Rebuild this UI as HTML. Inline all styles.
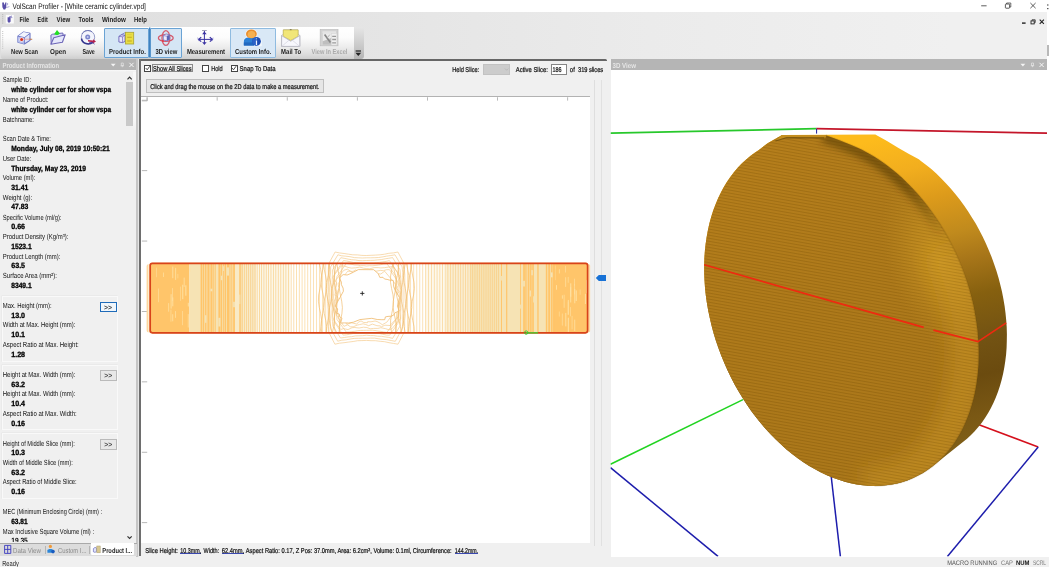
<!DOCTYPE html>
<html><head><meta charset="utf-8"><title>VolScan Profiler</title>
<style>
html,body{margin:0;padding:0;}
body{width:1049px;height:567px;overflow:hidden;position:relative;background:#f0f0f0;font-family:"Liberation Sans",sans-serif;font-size:7.5px;text-rendering:geometricPrecision;}
.t{position:absolute;white-space:nowrap;line-height:10px;height:10px;transform-origin:0 50%;display:block;}
.a{position:absolute;}
.gb{border:1px solid #f9f9f9;box-sizing:border-box;background:#f0f0f0;box-shadow:-0.5px -0.5px 0 #e4e4e4;}
.cb{width:7px;height:7px;background:#fff;border:0.8px solid #444;box-sizing:border-box;}

</style></head>
<body>
<!-- title bar -->
<div class="a" style="left:0;top:0;width:1049px;height:12.4px;background:#fff;"></div>
<!-- menu/toolbar background band -->
<div class="a" style="left:0;top:12.4px;width:1049px;height:47px;background:linear-gradient(90deg,#dedede 0,#e3e3e3 300px,#ebebeb 650px,#f0f0f0 950px,#f0f0f0 100%);"></div>
<!-- toolbar strip -->
<div class="a" id="tb" style="left:1px;top:26.5px;width:353px;height:32px;background:linear-gradient(180deg,#ffffff 0,#fcfcfc 33%,#eeeeee 60%,#dcdcdc 86%,#cecece 100%);border-radius:2px 0 0 2px;"></div>
<div class="a" style="left:354px;top:26.5px;width:9.5px;height:32px;background:linear-gradient(180deg,#e6e6e6 0,#c9c9c9 60%,#b5b5b5 100%);border-radius:0 3px 3px 0;"></div>
<!-- toolbar active buttons -->
<div class="a" style="left:103.5px;top:27.5px;width:45.5px;height:30px;background:#d5e6f5;border:1px solid #6aa3d4;box-sizing:border-box;border-radius:1px;"></div>
<div class="a" style="left:149.5px;top:27.5px;width:32.5px;height:30px;background:#d5e6f5;border:1px solid #6aa3d4;box-sizing:border-box;border-radius:1px;"></div>
<div class="a" style="left:229.7px;top:27.5px;width:46.3px;height:30px;background:#d9e8f6;border:1px solid #8fbbe0;box-sizing:border-box;border-radius:1px;"></div>

<!-- left panel -->
<div class="a" style="left:0;top:59.2px;width:136.0px;height:11.2px;background:#b4b4b4;"></div>
<div class="a" style="left:0;top:70.4px;width:136.4px;height:472.6px;background:#f0f0f0;"></div><div class="a" style="left:136.0px;top:59.2px;width:1.6px;height:497.4px;background:#c6c6c6;"></div><div class="a" style="left:137.6px;top:59.2px;width:1.8px;height:497.4px;background:#e5e5e5;"></div><div class="a" style="left:133.3px;top:70.4px;width:2.7px;height:60px;background:linear-gradient(180deg,#f8f8f8,#f8f8f8 80%,#f0f0f0);"></div>
<div class="a" style="left:0;top:70.4px;width:136px;height:1.8px;background:linear-gradient(180deg,#fafafa,#f0f0f0);"></div>
<!-- left scrollbar -->
<div class="a" style="left:125.9px;top:71px;width:7.4px;height:471px;background:#f0f0f0;"></div>
<div class="a" style="left:125.9px;top:82.4px;width:7.4px;height:44px;background:#c9c9c9;"></div>
<!-- group boxes -->
<div class="a gb" style="left:1.5px;top:295.8px;width:116.5px;height:66.5px;"></div>
<div class="a gb" style="left:1.5px;top:364.6px;width:116.5px;height:65px;"></div>
<div class="a gb" style="left:1.5px;top:432.6px;width:116.5px;height:66.5px;"></div>
<!-- >> buttons -->
<div class="a" style="left:100.1px;top:302.0px;width:17px;height:9.7px;background:#f0f6fb;border:1.3px solid #1f6bb9;box-sizing:border-box;"></div>
<div class="a" style="left:99.9px;top:370.1px;width:17.4px;height:10.6px;background:#e8e8e8;border:1px solid #bababa;box-sizing:border-box;"></div>
<div class="a" style="left:99.9px;top:439.1px;width:17.4px;height:10.5px;background:#e8e8e8;border:1px solid #bababa;box-sizing:border-box;"></div>
<!-- clipped last value -->
<svg class="a" style="left:0;top:534px;will-change:transform;opacity:0.999;" width="120" height="8.3" viewBox="0 534 120 8.3" font-family="'Liberation Sans', sans-serif"><text x="11.2" y="543.5" font-size="7.6" font-weight="700" fill="#000" textLength="16.6" lengthAdjust="spacingAndGlyphs">19.35</text></svg>
<!-- tabs -->
<div class="a" style="left:0;top:543px;width:137px;height:13px;background:#dcdcdc;"></div>
<div class="a" style="left:0;top:543px;width:137px;height:1px;background:#a9a9a9;"></div>
<div class="a" style="left:90.5px;top:543px;width:43.5px;height:12px;background:#fff;border-radius:0 0 1px 1px;"></div>
<div class="a" style="left:44.5px;top:546px;width:1px;height:8px;background:#b5b5b5;"></div>
<div class="a" style="left:88.5px;top:546px;width:1px;height:8px;background:#b5b5b5;"></div>
<!-- status bar -->
<div class="a" style="left:0;top:556.6px;width:1049px;height:10.4px;background:#f0f0f0;"></div>

<!-- center panel -->
<div class="a" style="left:139.5px;top:59.3px;width:468px;height:497.3px;background:#f0f0f0;"></div>
<div class="a" style="left:139.3px;top:59.3px;width:468.2px;height:1.7px;background:#666666;border-radius:0 1.5px 0 0;"></div>
<div class="a" style="left:139.3px;top:59.3px;width:1.7px;height:497px;background:#6e6e6e;"></div>
<!-- message box -->
<div class="a" style="left:145.6px;top:78.7px;width:178.2px;height:14.7px;background:#e6e6e6;border:1px solid #bfbfbf;box-sizing:border-box;"></div>
<!-- canvas -->
<div class="a" style="left:141px;top:96.2px;width:448.6px;height:447px;background:#fff;border-top:1px solid #b2b2b2;box-sizing:border-box;"></div>
<!-- checkboxes -->
<div class="a cb" style="left:144.2px;top:64.6px;"></div>
<div class="a cb" style="left:202.3px;top:64.6px;"></div>
<div class="a cb" style="left:230.5px;top:64.6px;"></div>
<!-- focus rect -->
<div class="a" style="left:151.6px;top:64.2px;width:41px;height:8px;border:0.7px solid #8a8a8a;box-sizing:border-box;"></div>
<!-- combos -->
<div class="a" style="left:482.8px;top:63.9px;width:27.5px;height:11.6px;background:#cccccc;border:1px solid #c2c2c2;box-sizing:border-box;"></div>
<div class="a" style="left:550.6px;top:64px;width:16.3px;height:10.6px;background:#fff;border:0.9px solid #858585;box-sizing:border-box;"></div>
<!-- slider track -->
<div class="a" style="left:593.6px;top:80px;width:1px;height:466px;background:#dedede;"></div>
<div class="a" style="left:600.6px;top:80px;width:1.6px;height:466px;background:#e1e1e1;"></div>

<!-- 3D panel -->
<div class="a" style="left:610.5px;top:59.2px;width:436.5px;height:10.4px;background:#b5b5b5;"></div>
<div class="a" style="left:610.5px;top:69.5px;width:436.5px;height:487px;background:#fff;"></div>
<div class="a" style="left:1047px;top:0;width:2px;height:557px;background:#fff;"></div>
<div class="a" style="left:1047px;top:45px;width:2px;height:10.5px;background:#b9b9b9;"></div>

<!-- underlines bottom line -->
<div class="a" style="left:180.3px;top:553.4px;width:20.9px;height:0.8px;background:#3a48b0;"></div>
<div class="a" style="left:221.8px;top:553.4px;width:22.3px;height:0.8px;background:#3a48b0;"></div>
<div class="a" style="left:454.8px;top:553.4px;width:23.4px;height:0.8px;background:#3a48b0;"></div>

<svg class="a" style="left:0;top:0;" width="1049" height="567" viewBox="0 0 1049 567">
<defs>
<clipPath id="v3"><rect x="610.5" y="69.5" width="436.5" height="487"/></clipPath>
<linearGradient id="gface" gradientUnits="userSpaceOnUse" x1="760" y1="140" x2="900" y2="480">
<stop offset="0" stop-color="#b27a17"/><stop offset="0.5" stop-color="#aa7516"/><stop offset="1" stop-color="#a67215"/></linearGradient>
<linearGradient id="grim" gradientUnits="userSpaceOnUse" x1="900" y1="134" x2="980" y2="486">
<stop offset="0" stop-color="#fdbb1c"/><stop offset="0.10" stop-color="#f2ae1e"/><stop offset="0.19" stop-color="#dd9b1b"/><stop offset="0.30" stop-color="#c08a1d"/><stop offset="0.376" stop-color="#a87619"/><stop offset="0.48" stop-color="#86600f"/><stop offset="0.6" stop-color="#735313"/><stop offset="0.7" stop-color="#6b4b0f"/><stop offset="0.81" stop-color="#7a5814"/><stop offset="0.9" stop-color="#806018"/><stop offset="1" stop-color="#7a5812"/></linearGradient>
<radialGradient id="gfr" gradientUnits="userSpaceOnUse" cx="940" cy="262" r="95" gradientTransform="translate(940 262) rotate(70) scale(1 0.55) translate(-940 -262)">
<stop offset="0" stop-color="#cf9820" stop-opacity="0.9"/><stop offset="0.45" stop-color="#c58f1e" stop-opacity="0.6"/><stop offset="1" stop-color="#b8841b" stop-opacity="0"/></radialGradient>
<linearGradient id="gsh" gradientUnits="userSpaceOnUse" x1="830" y1="135" x2="945" y2="235">
<stop offset="0" stop-color="#4a3205" stop-opacity="0.55"/><stop offset="0.6" stop-color="#4a3205" stop-opacity="0.6"/><stop offset="0.85" stop-color="#4a3205" stop-opacity="0.25"/><stop offset="1" stop-color="#4a3205" stop-opacity="0"/></linearGradient>
<pattern id="stri" width="40" height="3.0" patternUnits="userSpaceOnUse" patternTransform="rotate(10)">
<rect x="0" y="0" width="40" height="1.2" fill="#5a3c04" opacity="0.16"/><rect x="0" y="1.4" width="40" height="1.1" fill="#ffcf60" opacity="0.10"/></pattern>
<filter id="bl2" x="-30%" y="-30%" width="160%" height="160%"><feGaussianBlur stdDeviation="9"/></filter>
<filter id="bl" x="-20%" y="-20%" width="140%" height="140%"><feGaussianBlur stdDeviation="3.5"/></filter>
<clipPath id="cface"><path d="M782.1,135.1 L825.8,135.2 L840,140.4 L852.3,145.5 L855.9,147.1 L861.9,149.8 L867.8,152.9 L873.6,156.3 L879.4,160.0 L885.1,164.0 L890.7,168.3 L896.3,172.8 L901.7,177.6 L907.0,182.7 L912.2,188.0 L917.3,193.5 L922.2,199.2 L927.0,205.2 L931.6,211.4 L936.0,217.7 L940.3,224.3 L944.3,231.0 L948.2,237.8 L951.8,244.8 L955.3,251.9 L958.5,259.2 L961.5,266.5 L964.3,273.9 L966.9,281.4 L969.2,288.9 L971.2,296.5 L973.1,304.1 L974.6,311.8 L975.9,319.4 L977.0,327.0 L977.8,334.6 L978.3,342.1 L978.6,349.6 L978.6,357.0 L978.4,364.3 L977.9,371.5 L977.1,378.6 L976.1,385.6 L974.8,392.4 L973.3,399.1 L971.5,405.6 L969.5,411.9 L967.2,418.1 L964.7,424.0 L962.0,429.7 L959.0,435.2 L955.8,440.5 L952.4,445.5 L948.7,450.2 L944.9,454.7 L940.9,458.9 L936.6,462.9 L932.2,466.5 L927.7,469.8 L922.9,472.9 L918.0,475.6 L913.0,478.1 L907.8,480.2 L902.5,481.9 L897.1,483.4 L891.6,484.5 L885.9,485.3 L880.2,485.8 L874.5,486.0 L868.6,485.8 L862.7,485.2 L856.8,484.4 L850.8,483.2 L844.8,481.7 L838.8,479.8 L832.9,477.7 L826.9,475.2 L821.0,472.4 L815.1,469.3 L809.2,465.9 L803.4,462.2 L797.7,458.2 L792.1,454.0 L786.5,449.4 L781.1,444.6 L775.8,439.6 L770.6,434.3 L765.5,428.8 L760.6,423.0 L755.8,417.0 L751.2,410.9 L746.8,404.5 L742.6,398.0 L738.5,391.3 L734.6,384.4 L731.0,377.4 L727.5,370.3 L724.3,363.1 L721.3,355.7 L718.5,348.3 L715.9,340.8 L713.6,333.3 L711.6,325.7 L709.8,318.1 L708.2,310.5 L706.9,302.9 L705.8,295.2 L705.0,287.7 L704.5,280.1 L704.2,272.7 L704.2,265.2 L704.4,257.9 L704.9,250.7 L705.7,243.6 L706.7,236.7 L708.0,229.8 L709.5,223.1 L711.3,216.6 L713.3,210.3 L715.6,204.2 L718.1,198.2 L720.9,192.5 L723.8,187.0 L727.0,181.8 L730.5,176.8 L734.1,172.0 L737.9,167.5 L742.0,163.3 L746.2,159.4 L750.6,155.7 L755.1,152.4 L758.9,149.9 L767.6,143.3 Z"/></clipPath>
<radialGradient id="gshade" gradientUnits="userSpaceOnUse" cx="940" cy="250" r="70" gradientTransform="translate(940 250) rotate(60) scale(1 0.35) translate(-940 -250)">
<stop offset="0" stop-color="#5a3e08" stop-opacity="0.35"/><stop offset="1" stop-color="#5a3e08" stop-opacity="0"/></radialGradient>
</defs>
<g clip-path="url(#v3)">
<line x1="610.5" y1="133.2" x2="816.4" y2="128.7" stroke="#27c82b" stroke-width="1.8"/>
<line x1="816.4" y1="128.7" x2="1047" y2="133.2" stroke="#c4162a" stroke-width="1.8"/>
<line x1="816.6" y1="128.7" x2="816.6" y2="133.6" stroke="#1c1c9c" stroke-width="1"/>
<line x1="610.5" y1="464.2" x2="743" y2="399.6" stroke="#22d422" stroke-width="1.6"/>
<line x1="610.5" y1="467.6" x2="718" y2="556.4" stroke="#1d1dac" stroke-width="1.5"/>
<line x1="831.2" y1="476.5" x2="840.4" y2="556.5" stroke="#1d1dac" stroke-width="1.5"/>
<line x1="977" y1="424" x2="1038.2" y2="447.1" stroke="#d5101c" stroke-width="1.6"/>
<line x1="1038.2" y1="447.1" x2="947.4" y2="556.5" stroke="#1d1dac" stroke-width="1.5"/>
<path d="M782.1,135.1 L875.3,134.5 L887,141 L898.5,148.1 L909,154 L918.8,159.3 L920.9,160.9 L926.2,164.9 L931.3,169.1 L936.3,173.6 L941.3,178.4 L946.1,183.4 L950.7,188.5 L955.3,193.9 L959.7,199.5 L963.9,205.3 L968.0,211.2 L971.9,217.4 L975.7,223.6 L979.2,230.0 L982.6,236.5 L985.8,243.2 L988.7,249.9 L991.5,256.8 L994.0,263.7 L996.4,270.7 L998.5,277.7 L1000.3,284.7 L1002.0,291.8 L1003.4,298.9 L1004.6,306.0 L1005.5,313.1 L1006.2,320.1 L1006.7,327.1 L1006.9,334.1 L1006.8,340.9 L1006.6,347.7 L1006.1,354.4 L1005.3,361.0 L1004.3,367.4 L1003.1,373.8 L1001.6,379.9 L999.9,386.0 L998.0,391.8 L995.8,397.5 L993.4,402.9 L990.8,408.2 L988.0,413.3 L985.0,418.1 L981.8,422.7 L978.3,427.1 L974.7,431.2 L971.0,435.1 L967.0,438.7 L932.2,466.5 L927.7,469.8 L922.9,472.9 L918.0,475.6 L913.0,478.1 L907.8,480.2 L902.5,481.9 L897.1,483.4 L891.6,484.5 L885.9,485.3 L880.2,485.8 L874.5,486.0 L868.6,485.8 L862.7,485.2 L856.8,484.4 L850.8,483.2 L844.8,481.7 L838.8,479.8 L832.9,477.7 L826.9,475.2 L821.0,472.4 L815.1,469.3 L809.2,465.9 L803.4,462.2 L797.7,458.2 L792.1,454.0 L786.5,449.4 L781.1,444.6 L775.8,439.6 L770.6,434.3 L765.5,428.8 L760.6,423.0 L755.8,417.0 L751.2,410.9 L746.8,404.5 L742.6,398.0 L738.5,391.3 L734.6,384.4 L731.0,377.4 L727.5,370.3 L724.3,363.1 L721.3,355.7 L718.5,348.3 L715.9,340.8 L713.6,333.3 L711.6,325.7 L709.8,318.1 L708.2,310.5 L706.9,302.9 L705.8,295.2 L705.0,287.7 L704.5,280.1 L704.2,272.7 L704.2,265.2 L704.4,257.9 L704.9,250.7 L705.7,243.6 L706.7,236.7 L708.0,229.8 L709.5,223.1 L711.3,216.6 L713.3,210.3 L715.6,204.2 L718.1,198.2 L720.9,192.5 L723.8,187.0 L727.0,181.8 L730.5,176.8 L734.1,172.0 L737.9,167.5 L742.0,163.3 L746.2,159.4 L750.6,155.7 L755.1,152.4 L758.9,149.9 L767.6,143.3 Z" fill="url(#grim)"/>
<path d="M782.1,135.1 L825.8,135.2 L840,140.4 L852.3,145.5 L855.9,147.1 L861.9,149.8 L867.8,152.9 L873.6,156.3 L879.4,160.0 L885.1,164.0 L890.7,168.3 L896.3,172.8 L901.7,177.6 L907.0,182.7 L912.2,188.0 L917.3,193.5 L922.2,199.2 L927.0,205.2 L931.6,211.4 L936.0,217.7 L940.3,224.3 L944.3,231.0 L948.2,237.8 L951.8,244.8 L955.3,251.9 L958.5,259.2 L961.5,266.5 L964.3,273.9 L966.9,281.4 L969.2,288.9 L971.2,296.5 L973.1,304.1 L974.6,311.8 L975.9,319.4 L977.0,327.0 L977.8,334.6 L978.3,342.1 L978.6,349.6 L978.6,357.0 L978.4,364.3 L977.9,371.5 L977.1,378.6 L976.1,385.6 L974.8,392.4 L973.3,399.1 L971.5,405.6 L969.5,411.9 L967.2,418.1 L964.7,424.0 L962.0,429.7 L959.0,435.2 L955.8,440.5 L952.4,445.5 L948.7,450.2 L944.9,454.7 L940.9,458.9 L936.6,462.9 L932.2,466.5 L927.7,469.8 L922.9,472.9 L918.0,475.6 L913.0,478.1 L907.8,480.2 L902.5,481.9 L897.1,483.4 L891.6,484.5 L885.9,485.3 L880.2,485.8 L874.5,486.0 L868.6,485.8 L862.7,485.2 L856.8,484.4 L850.8,483.2 L844.8,481.7 L838.8,479.8 L832.9,477.7 L826.9,475.2 L821.0,472.4 L815.1,469.3 L809.2,465.9 L803.4,462.2 L797.7,458.2 L792.1,454.0 L786.5,449.4 L781.1,444.6 L775.8,439.6 L770.6,434.3 L765.5,428.8 L760.6,423.0 L755.8,417.0 L751.2,410.9 L746.8,404.5 L742.6,398.0 L738.5,391.3 L734.6,384.4 L731.0,377.4 L727.5,370.3 L724.3,363.1 L721.3,355.7 L718.5,348.3 L715.9,340.8 L713.6,333.3 L711.6,325.7 L709.8,318.1 L708.2,310.5 L706.9,302.9 L705.8,295.2 L705.0,287.7 L704.5,280.1 L704.2,272.7 L704.2,265.2 L704.4,257.9 L704.9,250.7 L705.7,243.6 L706.7,236.7 L708.0,229.8 L709.5,223.1 L711.3,216.6 L713.3,210.3 L715.6,204.2 L718.1,198.2 L720.9,192.5 L723.8,187.0 L727.0,181.8 L730.5,176.8 L734.1,172.0 L737.9,167.5 L742.0,163.3 L746.2,159.4 L750.6,155.7 L755.1,152.4 L758.9,149.9 L767.6,143.3 Z" fill="url(#gface)"/>
<path d="M782.1,135.1 L825.8,135.2 L840,140.4 L852.3,145.5 L855.9,147.1 L861.9,149.8 L867.8,152.9 L873.6,156.3 L879.4,160.0 L885.1,164.0 L890.7,168.3 L896.3,172.8 L901.7,177.6 L907.0,182.7 L912.2,188.0 L917.3,193.5 L922.2,199.2 L927.0,205.2 L931.6,211.4 L936.0,217.7 L940.3,224.3 L944.3,231.0 L948.2,237.8 L951.8,244.8 L955.3,251.9 L958.5,259.2 L961.5,266.5 L964.3,273.9 L966.9,281.4 L969.2,288.9 L971.2,296.5 L973.1,304.1 L974.6,311.8 L975.9,319.4 L977.0,327.0 L977.8,334.6 L978.3,342.1 L978.6,349.6 L978.6,357.0 L978.4,364.3 L977.9,371.5 L977.1,378.6 L976.1,385.6 L974.8,392.4 L973.3,399.1 L971.5,405.6 L969.5,411.9 L967.2,418.1 L964.7,424.0 L962.0,429.7 L959.0,435.2 L955.8,440.5 L952.4,445.5 L948.7,450.2 L944.9,454.7 L940.9,458.9 L936.6,462.9 L932.2,466.5 L927.7,469.8 L922.9,472.9 L918.0,475.6 L913.0,478.1 L907.8,480.2 L902.5,481.9 L897.1,483.4 L891.6,484.5 L885.9,485.3 L880.2,485.8 L874.5,486.0 L868.6,485.8 L862.7,485.2 L856.8,484.4 L850.8,483.2 L844.8,481.7 L838.8,479.8 L832.9,477.7 L826.9,475.2 L821.0,472.4 L815.1,469.3 L809.2,465.9 L803.4,462.2 L797.7,458.2 L792.1,454.0 L786.5,449.4 L781.1,444.6 L775.8,439.6 L770.6,434.3 L765.5,428.8 L760.6,423.0 L755.8,417.0 L751.2,410.9 L746.8,404.5 L742.6,398.0 L738.5,391.3 L734.6,384.4 L731.0,377.4 L727.5,370.3 L724.3,363.1 L721.3,355.7 L718.5,348.3 L715.9,340.8 L713.6,333.3 L711.6,325.7 L709.8,318.1 L708.2,310.5 L706.9,302.9 L705.8,295.2 L705.0,287.7 L704.5,280.1 L704.2,272.7 L704.2,265.2 L704.4,257.9 L704.9,250.7 L705.7,243.6 L706.7,236.7 L708.0,229.8 L709.5,223.1 L711.3,216.6 L713.3,210.3 L715.6,204.2 L718.1,198.2 L720.9,192.5 L723.8,187.0 L727.0,181.8 L730.5,176.8 L734.1,172.0 L737.9,167.5 L742.0,163.3 L746.2,159.4 L750.6,155.7 L755.1,152.4 L758.9,149.9 L767.6,143.3 Z" fill="url(#gfr)"/>
<g clip-path="url(#cface)"><path d="M955.3,251.9 L958.5,259.2 L961.5,266.5 L964.3,273.9 L966.9,281.4 L969.2,288.9 L971.2,296.5 L973.1,304.1 L974.6,311.8 L975.9,319.4 L977.0,327.0 L977.8,334.6 L978.3,342.1 L978.6,349.6 L978.6,357.0 L978.4,364.3 L977.9,371.5 L977.1,378.6 L976.1,385.6 L974.8,392.4 L973.3,399.1 L971.5,405.6 L969.5,411.9 L967.2,418.1 L964.7,424.0 L962.0,429.7 L959.0,435.2 L955.8,440.5 L952.4,445.5 L948.7,450.2 L944.9,454.7 L940.9,458.9 L936.6,462.9 L932.2,466.5 L927.7,469.8 L922.9,472.9 L918.0,475.6 L913.0,478.1 L907.8,480.2 L902.5,481.9 L897.1,483.4 L891.6,484.5 L885.9,485.3 L880.2,485.8 L874.5,486.0" fill="none" stroke="#cc961f" stroke-opacity="0.5" stroke-width="34" filter="url(#bl2)" transform="translate(-12,-2)"/></g>
<path d="M782.1,135.1 L825.8,135.2 L840,140.4 L852.3,145.5 L855.9,147.1 L861.9,149.8 L867.8,152.9 L873.6,156.3 L879.4,160.0 L885.1,164.0 L890.7,168.3 L896.3,172.8 L901.7,177.6 L907.0,182.7 L912.2,188.0 L917.3,193.5 L922.2,199.2 L927.0,205.2 L931.6,211.4 L936.0,217.7 L940.3,224.3 L944.3,231.0 L948.2,237.8 L951.8,244.8 L955.3,251.9 L958.5,259.2 L961.5,266.5 L964.3,273.9 L966.9,281.4 L969.2,288.9 L971.2,296.5 L973.1,304.1 L974.6,311.8 L975.9,319.4 L977.0,327.0 L977.8,334.6 L978.3,342.1 L978.6,349.6 L978.6,357.0 L978.4,364.3 L977.9,371.5 L977.1,378.6 L976.1,385.6 L974.8,392.4 L973.3,399.1 L971.5,405.6 L969.5,411.9 L967.2,418.1 L964.7,424.0 L962.0,429.7 L959.0,435.2 L955.8,440.5 L952.4,445.5 L948.7,450.2 L944.9,454.7 L940.9,458.9 L936.6,462.9 L932.2,466.5 L927.7,469.8 L922.9,472.9 L918.0,475.6 L913.0,478.1 L907.8,480.2 L902.5,481.9 L897.1,483.4 L891.6,484.5 L885.9,485.3 L880.2,485.8 L874.5,486.0 L868.6,485.8 L862.7,485.2 L856.8,484.4 L850.8,483.2 L844.8,481.7 L838.8,479.8 L832.9,477.7 L826.9,475.2 L821.0,472.4 L815.1,469.3 L809.2,465.9 L803.4,462.2 L797.7,458.2 L792.1,454.0 L786.5,449.4 L781.1,444.6 L775.8,439.6 L770.6,434.3 L765.5,428.8 L760.6,423.0 L755.8,417.0 L751.2,410.9 L746.8,404.5 L742.6,398.0 L738.5,391.3 L734.6,384.4 L731.0,377.4 L727.5,370.3 L724.3,363.1 L721.3,355.7 L718.5,348.3 L715.9,340.8 L713.6,333.3 L711.6,325.7 L709.8,318.1 L708.2,310.5 L706.9,302.9 L705.8,295.2 L705.0,287.7 L704.5,280.1 L704.2,272.7 L704.2,265.2 L704.4,257.9 L704.9,250.7 L705.7,243.6 L706.7,236.7 L708.0,229.8 L709.5,223.1 L711.3,216.6 L713.3,210.3 L715.6,204.2 L718.1,198.2 L720.9,192.5 L723.8,187.0 L727.0,181.8 L730.5,176.8 L734.1,172.0 L737.9,167.5 L742.0,163.3 L746.2,159.4 L750.6,155.7 L755.1,152.4 L758.9,149.9 L767.6,143.3 Z" fill="url(#stri)"/>
<g clip-path="url(#cface)"><path d="M825.8,135.2 L840,140.4 L852.3,145.5 L855.9,147.1 L861.9,149.8 L867.8,152.9 L873.6,156.3 L879.4,160.0 L885.1,164.0 L890.7,168.3 L896.3,172.8 L901.7,177.6 L907.0,182.7 L912.2,188.0 L917.3,193.5 L922.2,199.2 L927.0,205.2 L931.6,211.4 L936.0,217.7 L940.3,224.3 L944.3,231.0 L948.2,237.8 L951.8,244.8 L955.3,251.9 L958.5,259.2 L961.5,266.5 L964.3,273.9 L966.9,281.4 L969.2,288.9 L971.2,296.5 L973.1,304.1 L974.6,311.8 L975.9,319.4 L977.0,327.0 L977.8,334.6 L978.3,342.1 L978.6,349.6 L978.6,357.0 L978.4,364.3 L977.9,371.5 L977.1,378.6 L976.1,385.6 L974.8,392.4 L973.3,399.1 L971.5,405.6 L969.5,411.9 L967.2,418.1 L964.7,424.0 L962.0,429.7 L959.0,435.2 L955.8,440.5 L952.4,445.5 L948.7,450.2 L944.9,454.7 L940.9,458.9 L936.6,462.9 L932.2,466.5 L927.7,469.8 L922.9,472.9 L918.0,475.6 L913.0,478.1 L907.8,480.2 L902.5,481.9 L897.1,483.4 L891.6,484.5 L885.9,485.3 L880.2,485.8 L874.5,486.0" fill="none" stroke="url(#gsh)" stroke-width="10" filter="url(#bl)" transform="translate(-3,2)"/></g>
<path d="M782.1,135.1 L826,135.0 L826,137.6 L786.7,137.3 L776,140.6 Z" fill="#c48e1f"/>
<path d="M775.5,141 L786.7,137.6 L824,137.8" fill="none" stroke="#5e4208" stroke-opacity="0.6" stroke-width="1.2"/>
<path d="M825.8,135.2 L840,140.4 L852.3,145.5 L855.9,147.1 L861.9,149.8 L867.8,152.9 L873.6,156.3 L879.4,160.0 L885.1,164.0 L890.7,168.3 L896.3,172.8 L901.7,177.6 L907.0,182.7 L912.2,188.0 L917.3,193.5 L922.2,199.2 L927.0,205.2 L931.6,211.4 L936.0,217.7 L940.3,224.3 L944.3,231.0 L948.2,237.8 L951.8,244.8 L955.3,251.9 L958.5,259.2 L961.5,266.5 L964.3,273.9 L966.9,281.4 L969.2,288.9 L971.2,296.5 L973.1,304.1 L974.6,311.8 L975.9,319.4 L977.0,327.0 L977.8,334.6 L978.3,342.1 L978.6,349.6 L978.6,357.0 L978.4,364.3 L977.9,371.5 L977.1,378.6 L976.1,385.6 L974.8,392.4 L973.3,399.1 L971.5,405.6 L969.5,411.9 L967.2,418.1 L964.7,424.0 L962.0,429.7 L959.0,435.2 L955.8,440.5 L952.4,445.5 L948.7,450.2 L944.9,454.7 L940.9,458.9 L936.6,462.9 L932.2,466.5 L927.7,469.8 L922.9,472.9 L918.0,475.6 L913.0,478.1 L907.8,480.2 L902.5,481.9 L897.1,483.4 L891.6,484.5 L885.9,485.3 L880.2,485.8 L874.5,486.0" fill="none" stroke="#6e4f0c" stroke-opacity="0.18" stroke-width="1.6"/>
<path d="M704.2,264.8 L923.7,327.4 M933.4,330.1 L978,341.6 L1006.2,322.9" fill="none" stroke="#ee2a10" stroke-width="1.7"/>
</g></svg>
<svg class="a" style="left:0;top:0;" width="1049" height="567" viewBox="0 0 1049 567">
<defs><clipPath id="c2"><rect x="150.2" y="263.3" width="437.40000000000003" height="69.5" rx="2"/></clipPath><clipPath id="cv"><rect x="141.6" y="97.2" width="448.8" height="446"/></clipPath></defs>
<g clip-path="url(#cv)">
<rect x="146.6" y="97" width="0.9" height="3.6" fill="#b0b0b0"/>
<rect x="216.7" y="97" width="0.9" height="3.6" fill="#b0b0b0"/>
<rect x="286.8" y="97" width="0.9" height="3.6" fill="#b0b0b0"/>
<rect x="356.9" y="97" width="0.9" height="3.6" fill="#b0b0b0"/>
<rect x="427.0" y="97" width="0.9" height="3.6" fill="#b0b0b0"/>
<rect x="497.1" y="97" width="0.9" height="3.6" fill="#b0b0b0"/>
<rect x="567.2" y="97" width="0.9" height="3.6" fill="#b0b0b0"/>
<rect x="141.6" y="99.8" width="5.6" height="0.9" fill="#b0b0b0"/>
<rect x="141.6" y="170.2" width="5.6" height="0.9" fill="#b0b0b0"/>
<rect x="141.6" y="240.6" width="5.6" height="0.9" fill="#b0b0b0"/>
<rect x="141.6" y="311.0" width="5.6" height="0.9" fill="#b0b0b0"/>
<rect x="141.6" y="381.4" width="5.6" height="0.9" fill="#b0b0b0"/>
<rect x="141.6" y="451.8" width="5.6" height="0.9" fill="#b0b0b0"/>
<rect x="141.6" y="522.2" width="5.6" height="0.9" fill="#b0b0b0"/>
<path d="M141.6,100.9 H147.2 V97.2" fill="none" stroke="#b0b0b0" stroke-width="0.8"/>
<rect x="146.6" y="263.90000000000003" width="443.8" height="68.5" rx="2.5" fill="#fdd9a0"/><rect x="148.29999999999998" y="262.90000000000003" width="0.7" height="70.3" fill="#fff" opacity="0.7"/><rect x="149.39999999999998" y="262.40000000000003" width="439.00000000000006" height="71.3" rx="2.5" fill="#fde3ba"/>
<g clip-path="url(#c2)">
<rect x="150.2" y="263.3" width="437.40000000000003" height="69.5" fill="#fff"/>
<rect x="150.00" y="263.3" width="39.50" height="69.5" fill="#ffc56a" opacity="1"/>
<rect x="189.50" y="263.3" width="10.70" height="69.5" fill="#f6e3b4" opacity="1"/>
<rect x="200.20" y="263.3" width="31.80" height="69.5" fill="#f6e3b4" opacity="1"/>
<rect x="232.00" y="263.3" width="24.00" height="69.5" fill="#f6e3b4" opacity="0.75"/>
<rect x="256.00" y="263.3" width="34.00" height="69.5" fill="#f6e3b4" opacity="0.3"/>
<rect x="553.00" y="263.3" width="35.00" height="69.5" fill="#ffc56a" opacity="1"/>
<rect x="470.00" y="263.3" width="83.00" height="69.5" fill="#f6e3b4" opacity="1"/>
<rect x="446.00" y="263.3" width="24.00" height="69.5" fill="#f6e3b4" opacity="0.6"/>
<rect x="425.00" y="263.3" width="21.00" height="69.5" fill="#f6e3b4" opacity="0.25"/>
<rect x="156.1" y="267.6" width="0.6" height="9.6" fill="#ffe3a6" opacity="0.85"/>
<rect x="158.1" y="288.5" width="0.7" height="13.7" fill="#ffe3a6" opacity="0.85"/>
<rect x="163.2" y="272.5" width="0.8" height="4.5" fill="#ffe3a6" opacity="0.85"/>
<rect x="168.3" y="303.1" width="0.8" height="8.6" fill="#ffe3a6" opacity="0.85"/>
<rect x="170.6" y="309.6" width="0.7" height="12.1" fill="#ffe3a6" opacity="0.85"/>
<rect x="170.6" y="294.2" width="1.0" height="14.4" fill="#ffe3a6" opacity="0.85"/>
<rect x="172.3" y="288.1" width="0.7" height="12.8" fill="#ffe3a6" opacity="0.85"/>
<rect x="172.3" y="266.5" width="1.0" height="11.7" fill="#ffe3a6" opacity="0.85"/>
<rect x="172.3" y="314.2" width="0.9" height="7.1" fill="#ffe3a6" opacity="0.85"/>
<rect x="172.3" y="297.4" width="1.0" height="8.9" fill="#ffe3a6" opacity="0.85"/>
<rect x="175.2" y="267.8" width="0.9" height="12.1" fill="#ffe3a6" opacity="0.85"/>
<rect x="175.2" y="311.1" width="0.8" height="6.7" fill="#ffe3a6" opacity="0.85"/>
<rect x="177.6" y="273.9" width="0.6" height="4.5" fill="#ffe3a6" opacity="0.85"/>
<rect x="180.2" y="286.6" width="0.6" height="14.3" fill="#ffe3a6" opacity="0.85"/>
<rect x="182.2" y="311.0" width="0.7" height="14.2" fill="#ffe3a6" opacity="0.85"/>
<rect x="182.2" y="284.7" width="1.1" height="14.5" fill="#ffe3a6" opacity="0.85"/>
<rect x="183.7" y="277.6" width="0.9" height="9.3" fill="#ffe3a6" opacity="0.85"/>
<rect x="185.3" y="285.3" width="1.1" height="10.4" fill="#ffe3a6" opacity="0.85"/>
<rect x="187.8" y="302.8" width="1.0" height="3.7" fill="#ffe3a6" opacity="0.85"/>
<rect x="187.8" y="314.1" width="0.8" height="13.4" fill="#ffe3a6" opacity="0.85"/>
<rect x="189.7" y="267.8" width="0.7" height="3.9" fill="#ffe3a6" opacity="0.85"/>
<rect x="554.5" y="264.3" width="0.7" height="5.0" fill="#ffe3a6" opacity="0.85"/>
<rect x="554.5" y="265.8" width="0.9" height="14.4" fill="#ffe3a6" opacity="0.85"/>
<rect x="556.0" y="285.1" width="1.0" height="4.6" fill="#ffe3a6" opacity="0.85"/>
<rect x="558.9" y="269.2" width="0.8" height="4.3" fill="#ffe3a6" opacity="0.85"/>
<rect x="558.9" y="311.5" width="0.6" height="5.1" fill="#ffe3a6" opacity="0.85"/>
<rect x="561.9" y="295.3" width="0.9" height="3.4" fill="#ffe3a6" opacity="0.85"/>
<rect x="561.9" y="313.5" width="0.7" height="12.1" fill="#ffe3a6" opacity="0.85"/>
<rect x="563.7" y="294.7" width="0.8" height="13.1" fill="#ffe3a6" opacity="0.85"/>
<rect x="565.3" y="312.9" width="1.0" height="13.5" fill="#ffe3a6" opacity="0.85"/>
<rect x="565.3" y="277.2" width="0.8" height="9.7" fill="#ffe3a6" opacity="0.85"/>
<rect x="565.3" y="265.9" width="0.7" height="6.6" fill="#ffe3a6" opacity="0.85"/>
<rect x="567.8" y="317.7" width="1.1" height="15.8" fill="#ffe3a6" opacity="0.85"/>
<rect x="567.8" y="276.9" width="0.7" height="5.9" fill="#ffe3a6" opacity="0.85"/>
<rect x="567.8" y="299.9" width="1.0" height="14.7" fill="#ffe3a6" opacity="0.85"/>
<rect x="567.8" y="301.5" width="0.6" height="13.4" fill="#ffe3a6" opacity="0.85"/>
<rect x="570.2" y="307.1" width="0.7" height="9.2" fill="#ffe3a6" opacity="0.85"/>
<rect x="570.2" y="283.3" width="1.1" height="13.4" fill="#ffe3a6" opacity="0.85"/>
<rect x="570.2" y="287.2" width="1.0" height="15.3" fill="#ffe3a6" opacity="0.85"/>
<rect x="571.7" y="315.9" width="0.7" height="13.5" fill="#ffe3a6" opacity="0.85"/>
<rect x="574.3" y="284.3" width="0.7" height="10.1" fill="#ffe3a6" opacity="0.85"/>
<rect x="574.3" y="319.6" width="0.9" height="11.4" fill="#ffe3a6" opacity="0.85"/>
<rect x="574.3" y="289.0" width="1.0" height="14.3" fill="#ffe3a6" opacity="0.85"/>
<rect x="574.3" y="278.7" width="0.7" height="6.8" fill="#ffe3a6" opacity="0.85"/>
<rect x="575.7" y="290.4" width="1.1" height="10.6" fill="#ffe3a6" opacity="0.85"/>
<rect x="579.8" y="289.4" width="0.6" height="5.4" fill="#ffe3a6" opacity="0.85"/>
<rect x="584.9" y="293.8" width="1.0" height="10.2" fill="#ffe3a6" opacity="0.85"/>
<rect x="586.3" y="280.1" width="0.9" height="13.0" fill="#ffe3a6" opacity="0.85"/>
<rect x="200.50" y="263.3" width="1.59" height="69.5" fill="#ffc56a"/>
<rect x="202.64" y="263.3" width="1.66" height="69.5" fill="#ffc56a"/>
<rect x="205.05" y="263.3" width="1.43" height="69.5" fill="#ffc56a"/>
<rect x="205.05" y="315.2" width="1.43" height="7.6" fill="#f6e3b4"/>
<rect x="207.39" y="263.3" width="2.12" height="69.5" fill="#ffc56a"/>
<rect x="210.46" y="263.3" width="1.98" height="69.5" fill="#ffc56a"/>
<rect x="210.46" y="288.7" width="1.98" height="2.6" fill="#f6e3b4"/>
<rect x="212.83" y="263.3" width="0.90" height="69.5" fill="#ffc56a"/>
<rect x="214.65" y="263.3" width="1.02" height="69.5" fill="#ffc56a"/>
<rect x="218.39" y="263.3" width="2.13" height="69.5" fill="#ffc56a"/>
<rect x="218.39" y="317.8" width="2.13" height="8.7" fill="#f6e3b4"/>
<rect x="220.85" y="263.3" width="1.40" height="69.5" fill="#ffc56a"/>
<rect x="220.85" y="275.7" width="1.40" height="4.5" fill="#f6e3b4"/>
<rect x="223.04" y="263.3" width="0.83" height="69.5" fill="#ffc56a"/>
<rect x="223.04" y="266.3" width="0.83" height="4.7" fill="#f6e3b4"/>
<rect x="224.56" y="263.3" width="1.52" height="69.5" fill="#ffc56a"/>
<rect x="226.91" y="263.3" width="2.16" height="69.5" fill="#ffc56a"/>
<rect x="226.91" y="267.4" width="2.16" height="8.2" fill="#f6e3b4"/>
<rect x="229.49" y="263.3" width="0.98" height="69.5" fill="#ffc56a"/>
<rect x="231.32" y="263.3" width="1.16" height="69.5" fill="#ffc56a"/>
<rect x="233.14" y="263.3" width="1.78" height="69.5" fill="#ffc56a"/>
<rect x="233.14" y="301.8" width="1.78" height="5.4" fill="#f6e3b4"/>
<rect x="239.31" y="263.3" width="2.01" height="69.5" fill="#ffc56a"/>
<rect x="239.31" y="294.6" width="2.01" height="9.4" fill="#f6e3b4"/>
<rect x="501.00" y="263.3" width="0.95" height="69.5" fill="#ffc56a"/>
<rect x="501.00" y="276.0" width="0.95" height="4.5" fill="#f6e3b4"/>
<rect x="506.12" y="263.3" width="1.15" height="69.5" fill="#ffc56a"/>
<rect x="520.14" y="263.3" width="0.88" height="69.5" fill="#ffc56a"/>
<rect x="520.14" y="304.6" width="0.88" height="4.0" fill="#f6e3b4"/>
<rect x="523.16" y="263.3" width="1.74" height="69.5" fill="#ffc56a"/>
<rect x="523.16" y="280.8" width="1.74" height="5.7" fill="#f6e3b4"/>
<rect x="525.23" y="263.3" width="1.42" height="69.5" fill="#ffc56a"/>
<rect x="527.63" y="263.3" width="1.57" height="69.5" fill="#ffc56a"/>
<rect x="529.64" y="263.3" width="1.30" height="69.5" fill="#ffc56a"/>
<rect x="529.64" y="290.5" width="1.30" height="6.0" fill="#f6e3b4"/>
<rect x="531.30" y="263.3" width="1.51" height="69.5" fill="#ffc56a"/>
<rect x="531.30" y="270.1" width="1.51" height="5.2" fill="#f6e3b4"/>
<rect x="533.04" y="263.3" width="0.83" height="69.5" fill="#ffc56a"/>
<rect x="533.04" y="296.3" width="0.83" height="6.2" fill="#f6e3b4"/>
<rect x="537.30" y="263.3" width="1.35" height="69.5" fill="#ffc56a"/>
<rect x="545.82" y="263.3" width="1.53" height="69.5" fill="#ffc56a"/>
<rect x="548.20" y="263.3" width="1.96" height="69.5" fill="#ffc56a"/>
<rect x="550.90" y="263.3" width="1.77" height="69.5" fill="#ffc56a"/>
<rect x="550.90" y="272.4" width="1.77" height="4.9" fill="#f6e3b4"/>
<rect x="552.96" y="263.3" width="1.97" height="69.5" fill="#ffc56a"/>
<rect x="240.00" y="263.3" width="0.8" height="69.5" fill="#f9d08a" opacity="1.00"/>
<rect x="242.00" y="263.3" width="0.8" height="69.5" fill="#f9d08a" opacity="0.99"/>
<rect x="244.03" y="263.3" width="0.8" height="69.5" fill="#f9d08a" opacity="0.99"/>
<rect x="246.08" y="263.3" width="0.8" height="69.5" fill="#f9d08a" opacity="0.98"/>
<rect x="248.16" y="263.3" width="0.8" height="69.5" fill="#f9d08a" opacity="0.97"/>
<rect x="250.27" y="263.3" width="0.8" height="69.5" fill="#f9d08a" opacity="0.97"/>
<rect x="252.41" y="263.3" width="0.8" height="69.5" fill="#f9d08a" opacity="0.96"/>
<rect x="254.57" y="263.3" width="0.8" height="69.5" fill="#f9d08a" opacity="0.95"/>
<rect x="256.77" y="263.3" width="0.8" height="69.5" fill="#f9d08a" opacity="0.94"/>
<rect x="258.99" y="263.3" width="0.8" height="69.5" fill="#f9d08a" opacity="0.94"/>
<rect x="261.24" y="263.3" width="0.8" height="69.5" fill="#f9d08a" opacity="0.93"/>
<rect x="263.53" y="263.3" width="0.8" height="69.5" fill="#f9d08a" opacity="0.92"/>
<rect x="265.84" y="263.3" width="0.8" height="69.5" fill="#f9d08a" opacity="0.91"/>
<rect x="268.19" y="263.3" width="0.8" height="69.5" fill="#f9d08a" opacity="0.91"/>
<rect x="270.56" y="263.3" width="0.8" height="69.5" fill="#f9d08a" opacity="0.90"/>
<rect x="272.97" y="263.3" width="0.8" height="69.5" fill="#f9d08a" opacity="0.89"/>
<rect x="275.41" y="263.3" width="0.8" height="69.5" fill="#f9d08a" opacity="0.88"/>
<rect x="277.88" y="263.3" width="0.8" height="69.5" fill="#f9d08a" opacity="0.87"/>
<rect x="280.39" y="263.3" width="0.8" height="69.5" fill="#f9d08a" opacity="0.87"/>
<rect x="282.92" y="263.3" width="0.8" height="69.5" fill="#f9d08a" opacity="0.86"/>
<rect x="285.50" y="263.3" width="0.8" height="69.5" fill="#f9d08a" opacity="0.85"/>
<rect x="288.10" y="263.3" width="0.8" height="69.5" fill="#f9d08a" opacity="0.84"/>
<rect x="290.74" y="263.3" width="0.8" height="69.5" fill="#f9d08a" opacity="0.83"/>
<rect x="293.42" y="263.3" width="0.8" height="69.5" fill="#f9d08a" opacity="0.82"/>
<rect x="296.13" y="263.3" width="0.8" height="69.5" fill="#f9d08a" opacity="0.81"/>
<rect x="298.88" y="263.3" width="0.8" height="69.5" fill="#f9d08a" opacity="0.80"/>
<rect x="301.67" y="263.3" width="0.8" height="69.5" fill="#f9d08a" opacity="0.79"/>
<rect x="304.49" y="263.3" width="0.8" height="69.5" fill="#f9d08a" opacity="0.79"/>
<rect x="307.35" y="263.3" width="0.8" height="69.5" fill="#f9d08a" opacity="0.78"/>
<rect x="310.25" y="263.3" width="0.8" height="69.5" fill="#f9d08a" opacity="0.77"/>
<rect x="313.18" y="263.3" width="0.8" height="69.5" fill="#f9d08a" opacity="0.76"/>
<rect x="316.16" y="263.3" width="0.8" height="69.5" fill="#f9d08a" opacity="0.75"/>
<rect x="319.17" y="263.3" width="0.8" height="69.5" fill="#f9d08a" opacity="0.74"/>
<rect x="322.23" y="263.3" width="0.8" height="69.5" fill="#f9d08a" opacity="0.73"/>
<rect x="325.33" y="263.3" width="0.8" height="69.5" fill="#f9d08a" opacity="0.72"/>
<rect x="328.46" y="263.3" width="0.8" height="69.5" fill="#f9d08a" opacity="0.71"/>
<rect x="498.00" y="263.3" width="0.8" height="69.5" fill="#f9d08a" opacity="1.00"/>
<rect x="496.00" y="263.3" width="0.8" height="69.5" fill="#f9d08a" opacity="0.99"/>
<rect x="493.97" y="263.3" width="0.8" height="69.5" fill="#f9d08a" opacity="0.99"/>
<rect x="491.92" y="263.3" width="0.8" height="69.5" fill="#f9d08a" opacity="0.98"/>
<rect x="489.84" y="263.3" width="0.8" height="69.5" fill="#f9d08a" opacity="0.97"/>
<rect x="487.74" y="263.3" width="0.8" height="69.5" fill="#f9d08a" opacity="0.97"/>
<rect x="485.61" y="263.3" width="0.8" height="69.5" fill="#f9d08a" opacity="0.96"/>
<rect x="483.45" y="263.3" width="0.8" height="69.5" fill="#f9d08a" opacity="0.95"/>
<rect x="481.26" y="263.3" width="0.8" height="69.5" fill="#f9d08a" opacity="0.95"/>
<rect x="479.04" y="263.3" width="0.8" height="69.5" fill="#f9d08a" opacity="0.94"/>
<rect x="476.80" y="263.3" width="0.8" height="69.5" fill="#f9d08a" opacity="0.93"/>
<rect x="474.52" y="263.3" width="0.8" height="69.5" fill="#f9d08a" opacity="0.92"/>
<rect x="472.22" y="263.3" width="0.8" height="69.5" fill="#f9d08a" opacity="0.92"/>
<rect x="469.89" y="263.3" width="0.8" height="69.5" fill="#f9d08a" opacity="0.91"/>
<rect x="467.53" y="263.3" width="0.8" height="69.5" fill="#f9d08a" opacity="0.90"/>
<rect x="465.13" y="263.3" width="0.8" height="69.5" fill="#f9d08a" opacity="0.89"/>
<rect x="462.71" y="263.3" width="0.8" height="69.5" fill="#f9d08a" opacity="0.89"/>
<rect x="460.25" y="263.3" width="0.8" height="69.5" fill="#f9d08a" opacity="0.88"/>
<rect x="457.77" y="263.3" width="0.8" height="69.5" fill="#f9d08a" opacity="0.87"/>
<rect x="455.25" y="263.3" width="0.8" height="69.5" fill="#f9d08a" opacity="0.86"/>
<rect x="452.70" y="263.3" width="0.8" height="69.5" fill="#f9d08a" opacity="0.85"/>
<rect x="450.11" y="263.3" width="0.8" height="69.5" fill="#f9d08a" opacity="0.85"/>
<rect x="447.49" y="263.3" width="0.8" height="69.5" fill="#f9d08a" opacity="0.84"/>
<rect x="444.84" y="263.3" width="0.8" height="69.5" fill="#f9d08a" opacity="0.83"/>
<rect x="442.16" y="263.3" width="0.8" height="69.5" fill="#f9d08a" opacity="0.82"/>
<rect x="439.43" y="263.3" width="0.8" height="69.5" fill="#f9d08a" opacity="0.81"/>
<rect x="436.68" y="263.3" width="0.8" height="69.5" fill="#f9d08a" opacity="0.80"/>
<rect x="433.89" y="263.3" width="0.8" height="69.5" fill="#f9d08a" opacity="0.79"/>
<rect x="431.06" y="263.3" width="0.8" height="69.5" fill="#f9d08a" opacity="0.78"/>
<rect x="428.20" y="263.3" width="0.8" height="69.5" fill="#f9d08a" opacity="0.77"/>
<rect x="425.30" y="263.3" width="0.8" height="69.5" fill="#f9d08a" opacity="0.77"/>
<rect x="422.36" y="263.3" width="0.8" height="69.5" fill="#f9d08a" opacity="0.76"/>
<rect x="419.38" y="263.3" width="0.8" height="69.5" fill="#f9d08a" opacity="0.75"/>
<rect x="416.37" y="263.3" width="0.8" height="69.5" fill="#f9d08a" opacity="0.74"/>
<rect x="413.31" y="263.3" width="0.8" height="69.5" fill="#f9d08a" opacity="0.73"/>
<rect x="410.22" y="263.3" width="0.8" height="69.5" fill="#f9d08a" opacity="0.72"/>
<rect x="407.09" y="263.3" width="0.8" height="69.5" fill="#f9d08a" opacity="0.71"/>
</g>
<path d="M335.1,252.0 L339.3,252.9 L344.1,253.5 L348.5,254.2 L352.8,254.8 L357.4,254.9 L361.9,255.4 L366.4,255.5 L371.2,255.3 L375.4,255.1 L380.1,254.8 L384.6,254.2 L388.8,253.3 L393.4,252.9 L397.9,252.0 L404.0,263.5 L404.4,269.5 L404.8,275.2 L404.8,280.9 L405.1,286.6 L405.0,292.5 L405.0,298.2 L405.4,303.5 L405.1,309.6 L405.2,315.1 L404.6,320.7 L404.7,326.4 L404.3,332.1 L398.0,344.2 L393.3,343.4 L389.0,342.7 L384.6,341.7 L380.2,341.3 L375.3,340.7 L371.0,340.7 L366.4,340.4 L361.9,340.6 L357.7,340.7 L353.1,341.5 L348.3,342.1 L344.1,342.7 L339.4,343.2 L334.9,344.2 L328.8,332.2 L328.4,326.5 L328.0,320.7 L328.2,315.0 L328.1,309.3 L327.7,303.7 L327.6,297.9 L328.1,292.5 L328.1,286.6 L328.3,281.1 L328.3,275.3 L328.3,269.5 L328.7,263.8 Z" fill="none" stroke="#f4c988" stroke-width="0.7" stroke-linejoin="round" opacity="0.95"/>
<path d="M337.9,254.8 L341.7,255.8 L345.8,256.2 L350.0,256.7 L354.3,257.6 L358.2,257.8 L362.3,258.0 L366.4,257.8 L370.4,257.8 L374.9,257.7 L378.7,257.5 L383.1,256.8 L386.8,256.1 L390.9,255.5 L395.0,254.8 L402.1,266.9 L402.7,272.2 L402.7,277.2 L403.0,282.4 L403.0,287.4 L403.1,293.0 L403.0,298.0 L403.2,303.4 L402.9,308.3 L402.8,313.5 L402.7,319.0 L402.7,324.1 L402.0,328.9 L395.3,341.3 L391.1,340.5 L386.8,339.7 L383.1,339.3 L379.0,338.9 L374.6,338.1 L370.4,338.1 L366.6,338.2 L362.5,338.2 L358.4,338.3 L354.2,338.4 L350.2,339.0 L346.2,339.8 L341.8,340.2 L337.7,341.2 L330.8,328.9 L330.3,323.9 L330.3,318.7 L329.9,313.6 L329.7,308.3 L329.8,303.4 L329.9,298.2 L329.8,292.7 L329.8,287.9 L330.2,282.3 L330.0,277.3 L330.6,272.0 L330.6,267.0 Z" fill="none" stroke="#f4c988" stroke-width="0.7" stroke-linejoin="round" opacity="0.95"/>
<path d="M340.8,257.7 L344.1,258.3 L348.0,259.1 L351.5,259.7 L355.5,260.0 L359.0,260.6 L362.7,260.7 L366.4,260.5 L370.3,260.4 L374.1,260.3 L377.4,259.9 L381.3,259.6 L385.2,258.8 L388.6,258.3 L392.6,257.6 L400.0,269.8 L400.5,274.9 L400.9,279.5 L401.2,284.2 L401.0,288.5 L401.4,293.5 L401.0,298.1 L401.1,302.6 L401.0,307.1 L400.7,311.9 L400.7,316.9 L400.3,321.5 L400.1,325.9 L392.6,338.4 L388.7,337.4 L385.0,336.9 L381.5,336.3 L377.5,336.2 L373.7,335.6 L370.4,335.6 L366.3,335.2 L362.6,335.7 L359.0,335.8 L355.6,335.9 L351.6,336.7 L348.1,336.9 L344.4,337.5 L340.5,338.0 L332.9,326.2 L332.5,321.5 L332.0,316.5 L332.0,312.2 L332.1,307.3 L331.7,302.6 L331.8,298.2 L331.7,293.5 L332.0,288.8 L332.2,284.1 L332.2,279.3 L332.4,274.9 L332.5,269.9 Z" fill="none" stroke="#f4c988" stroke-width="0.7" stroke-linejoin="round" opacity="0.95"/>
<path d="M343.5,260.6 L346.5,261.0 L350.0,261.7 L353.5,262.5 L356.8,262.5 L359.7,262.8 L363.2,263.2 L366.5,263.1 L369.8,263.2 L373.2,263.1 L376.6,262.7 L379.5,262.4 L382.9,261.8 L386.2,261.4 L389.4,260.6 L398.1,273.1 L398.7,277.4 L398.7,281.4 L399.2,285.6 L398.9,289.9 L399.2,294.1 L399.0,298.0 L399.3,302.3 L399.3,306.0 L398.8,310.2 L398.6,314.8 L398.6,318.9 L398.2,323.0 L389.6,335.2 L386.4,335.0 L382.8,334.3 L379.8,333.6 L376.3,333.2 L373.0,332.9 L369.8,332.9 L366.4,332.6 L363.1,333.0 L359.7,333.0 L356.5,333.5 L353.3,333.5 L349.8,334.2 L346.7,334.8 L343.2,335.1 L334.8,322.7 L334.4,318.5 L334.5,314.4 L334.1,310.3 L333.9,306.4 L334.1,302.1 L333.6,298.1 L333.7,293.6 L334.1,289.7 L334.2,285.6 L334.4,281.5 L334.3,277.1 L334.8,273.3 Z" fill="none" stroke="#f4c988" stroke-width="0.7" stroke-linejoin="round" opacity="0.95"/>
<path d="M346.4,263.4 L349.2,264.0 L352.0,264.4 L354.8,265.0 L358.0,265.1 L360.7,265.7 L363.8,265.6 L366.3,266.0 L369.6,265.7 L372.1,265.8 L375.1,265.5 L378.2,265.1 L380.8,264.7 L383.8,264.0 L387.0,263.8 L396.1,276.3 L396.5,280.0 L396.7,283.4 L396.8,287.3 L397.3,290.6 L397.2,294.5 L397.0,298.2 L397.0,301.6 L397.1,305.3 L396.8,308.8 L396.8,312.4 L396.6,316.0 L396.2,319.4 L386.9,332.4 L383.8,332.0 L381.1,331.4 L377.9,331.0 L375.0,330.5 L372.3,330.2 L369.4,330.3 L366.3,330.3 L363.4,330.4 L360.8,330.4 L357.6,330.7 L354.8,331.3 L351.8,331.6 L349.3,332.0 L346.4,332.2 L337.0,319.6 L336.7,316.2 L336.1,312.5 L336.3,308.6 L335.8,305.3 L335.7,301.8 L335.7,298.2 L335.7,294.4 L336.1,290.7 L335.9,287.2 L336.2,283.4 L336.3,279.8 L337.0,276.5 Z" fill="none" stroke="#f4c988" stroke-width="0.7" stroke-linejoin="round" opacity="0.95"/>
<path d="M341.2,265.9 L344.7,266.1 L348.0,267.4 L351.4,268.1 L355.5,267.8 L359.8,267.1 L363.7,268.2 L366.3,268.5 L369.8,268.8 L374.1,267.6 L378.1,267.6 L380.8,267.9 L384.3,267.7 L388.3,267.1 L393.4,266.7 L400.1,276.7 L399.1,279.7 L399.6,284.2 L400.3,287.5 L401.3,290.3 L400.2,294.8 L399.8,297.1 L400.4,300.8 L400.3,304.5 L400.6,308.7 L399.7,312.2 L400.0,314.8 L400.6,318.5 L391.9,328.8 L389.0,329.8 L385.6,328.7 L380.9,327.7 L377.9,328.4 L373.7,328.4 L370.1,328.8 L366.9,327.5 L363.5,327.2 L359.1,328.0 L354.9,327.5 L352.1,327.7 L348.0,329.6 L343.6,328.6 L340.7,329.5 L333.5,319.6 L332.4,315.2 L332.4,311.2 L333.3,309.0 L332.8,304.1 L333.0,301.9 L332.2,298.4 L332.2,294.0 L331.7,290.5 L331.7,287.2 L333.2,284.4 L333.6,280.9 L332.8,277.1 Z" fill="none" stroke="#f4c988" stroke-width="0.7" stroke-linejoin="round" opacity="0.95"/>
<path d="M343.9,270.2 L347.4,269.2 L350.9,271.4 L353.0,271.4 L355.6,270.0 L359.4,271.5 L364.5,271.6 L366.0,272.0 L369.3,270.3 L374.0,271.2 L376.6,271.1 L380.5,270.4 L383.4,270.7 L386.6,269.7 L389.5,269.7 L396.7,279.7 L397.7,282.3 L398.7,285.4 L396.6,288.2 L399.1,291.7 L397.1,293.8 L396.9,298.5 L398.4,301.4 L398.6,302.7 L398.1,306.4 L398.5,310.5 L398.4,311.5 L398.1,316.6 L390.1,325.5 L384.9,325.2 L381.3,326.8 L380.1,325.9 L376.9,325.7 L372.3,324.1 L368.7,325.7 L365.7,324.5 L363.1,323.8 L359.5,324.6 L357.5,325.0 L353.2,326.8 L350.5,326.8 L347.6,324.9 L343.9,326.3 L336.5,315.2 L336.1,312.7 L334.6,310.7 L334.1,307.6 L334.2,302.6 L334.2,301.6 L336.1,296.7 L334.9,295.0 L335.8,291.3 L335.1,288.8 L336.2,285.7 L336.7,282.8 L335.1,280.9 Z" fill="none" stroke="#f4c988" stroke-width="0.7" stroke-linejoin="round" opacity="0.95"/>
<path d="M347.7,271.2 L350.8,271.4 L354.1,273.8 L356.7,273.9 L358.0,273.3 L360.8,275.2 L362.4,275.3 L364.9,273.0 L368.4,275.3 L371.9,273.4 L375.9,272.8 L377.1,273.5 L380.8,274.0 L383.1,272.3 L384.7,271.3 L395.7,284.4 L395.6,285.1 L394.8,289.5 L395.5,289.7 L395.3,294.6 L394.6,294.6 L394.8,298.7 L396.6,299.2 L394.2,301.9 L394.6,305.1 L393.9,306.8 L393.8,311.4 L395.3,310.8 L386.9,322.1 L382.2,324.8 L380.9,323.6 L377.0,321.5 L375.0,321.0 L370.9,321.8 L367.6,321.7 L367.5,322.7 L363.8,322.5 L361.0,320.9 L358.8,322.0 L356.6,324.0 L352.8,323.1 L351.2,322.9 L346.8,324.3 L339.7,313.1 L338.9,311.0 L338.6,307.9 L337.6,304.4 L338.1,301.3 L337.3,301.3 L338.2,298.4 L336.7,295.4 L337.5,293.7 L337.5,291.5 L339.4,287.5 L338.7,287.2 L338.1,283.8 Z" fill="none" stroke="#f4c988" stroke-width="0.7" stroke-linejoin="round" opacity="0.95"/>
<path d="M399.4,297.5 L397.5,306.2 L399.2,311.1 L395.1,312.7 L393.8,315.0 L391.2,316.2 L388.0,316.4 L385.4,316.9 L384.7,319.7 L381.2,319.7 L377.2,319.5 L371.8,318.3 L359.9,319.6 L353.4,322.2 L348.6,323.0 L344.6,322.9 L340.6,323.0 L342.0,318.2 L339.7,316.9 L339.4,314.2 L336.2,313.1 L337.7,309.1 L335.1,306.1 L340.0,297.5 L343.4,291.2 L343.1,288.1 L341.4,284.7 L341.3,282.0 L339.5,278.0 L341.2,276.2 L343.2,274.6 L347.1,275.0 L349.9,273.9 L353.2,272.3 L358.3,269.6 L373.7,269.7 L378.2,273.6 L379.8,277.4 L383.0,277.3 L384.5,279.0 L387.1,279.4 L389.5,280.1 L393.2,280.4 L393.7,283.0 L393.6,286.2 L394.7,289.5 Z" fill="#fff" stroke="#efb868" stroke-width="0.8" stroke-linejoin="round"/>
<path d="M319.3,263.3 L320.7,269.6 L321.6,275.9 L321.2,282.3 L320.0,288.6 L318.7,294.9 L318.4,301.2 L319.3,307.5 L320.7,313.8 L321.6,320.2 L321.2,326.5 L319.9,332.8" fill="none" stroke="#f2bf72" stroke-width="0.7"/>
<path d="M323.9,263.3 L322.7,269.6 L321.4,275.9 L321.0,282.3 L321.8,288.6 L323.2,294.9 L324.1,301.2 L323.9,307.5 L322.7,313.8 L321.4,320.2 L321.0,326.5 L321.8,332.8" fill="none" stroke="#f2bf72" stroke-width="0.7"/>
<path d="M323.6,263.3 L324.3,269.6 L325.6,275.9 L326.7,282.3 L326.6,288.6 L325.5,294.9 L324.1,301.2 L323.6,307.5 L324.3,313.8 L325.7,320.2 L326.7,326.5 L326.6,332.8" fill="none" stroke="#f2bf72" stroke-width="0.7"/>
<path d="M329.2,263.3 L329.3,269.6 L328.2,275.9 L326.9,282.3 L326.2,288.6 L326.8,294.9 L328.1,301.2 L329.2,307.5 L329.3,313.8 L328.2,320.2 L326.8,326.5 L326.2,332.8" fill="none" stroke="#f2bf72" stroke-width="0.7"/>
<path d="M329.6,263.3 L328.8,269.6 L329.2,275.9 L330.5,282.3 L331.7,288.6 L331.9,294.9 L330.9,301.2 L329.6,307.5 L328.8,313.8 L329.3,320.2 L330.6,326.5 L331.8,332.8" fill="none" stroke="#f2bf72" stroke-width="0.7"/>
<path d="M333.0,263.3 L334.2,269.6 L334.6,275.9 L333.7,282.3 L332.3,288.6 L331.4,294.9 L331.8,301.2 L333.0,307.5 L334.3,313.8 L334.6,320.2 L333.7,326.5 L332.3,332.8" fill="none" stroke="#f2bf72" stroke-width="0.7"/>
<path d="M336.4,263.3 L335.1,269.6 L334.1,275.9 L334.3,282.3 L335.5,288.6 L336.8,294.9 L337.2,301.2 L336.4,307.5 L335.0,313.8 L334.1,320.2 L334.3,326.5 L335.5,332.8" fill="none" stroke="#f2bf72" stroke-width="0.7"/>
<path d="M336.8,263.3 L337.9,269.6 L339.2,275.9 L339.8,282.3 L339.1,288.6 L337.8,294.9 L336.7,301.2 L336.8,307.5 L337.9,313.8 L339.3,320.2 L339.8,326.5 L339.1,332.8" fill="none" stroke="#f2bf72" stroke-width="0.7"/>
<path d="M342.4,263.3 L341.9,269.6 L340.5,275.9 L339.4,282.3 L339.3,288.6 L340.4,294.9 L341.7,301.2 L342.4,307.5 L341.9,313.8 L340.5,320.2 L339.4,326.5 L339.3,332.8" fill="none" stroke="#f2bf72" stroke-width="0.7"/>
<path d="M393.0,263.3 L391.7,269.6 L390.6,275.9 L390.5,282.3 L391.6,288.6 L393.0,294.9 L393.6,301.2 L393.0,307.5 L391.7,313.8 L390.6,320.2 L390.6,326.5 L391.6,332.8" fill="none" stroke="#f2bf72" stroke-width="0.7"/>
<path d="M393.1,263.3 L394.1,269.6 L395.4,275.9 L396.2,282.3 L395.7,288.6 L394.4,294.9 L393.2,301.2 L393.1,307.5 L394.1,313.8 L395.5,320.2 L396.2,326.5 L395.7,332.8" fill="none" stroke="#f2bf72" stroke-width="0.7"/>
<path d="M398.8,263.3 L398.4,269.6 L397.2,275.9 L395.9,282.3 L395.6,288.6 L396.5,294.9 L397.9,301.2 L398.8,307.5 L398.4,313.8 L397.1,320.2 L395.9,326.5 L395.7,332.8" fill="none" stroke="#f2bf72" stroke-width="0.7"/>
<path d="M398.6,263.3 L398.2,269.6 L399.0,275.9 L400.4,282.3 L401.3,288.6 L401.1,294.9 L399.9,301.2 L398.6,307.5 L398.2,313.8 L399.0,320.2 L400.4,326.5 L401.3,332.8" fill="none" stroke="#f2bf72" stroke-width="0.7"/>
<path d="M402.8,263.3 L403.9,269.6 L403.8,275.9 L402.7,282.3 L401.3,288.6 L400.8,294.9 L401.5,301.2 L402.9,307.5 L403.9,313.8 L403.8,320.2 L402.6,326.5 L401.3,332.8" fill="none" stroke="#f2bf72" stroke-width="0.7"/>
<path d="M405.4,263.3 L404.1,269.6 L403.4,275.9 L404.0,282.3 L405.3,288.6 L406.4,294.9 L406.5,301.2 L405.4,307.5 L404.0,313.8 L403.4,320.2 L404.0,326.5 L405.3,332.8" fill="none" stroke="#f2bf72" stroke-width="0.7"/>
<path d="M406.4,263.3 L407.7,269.6 L408.9,275.9 L409.1,282.3 L408.1,288.6 L406.8,294.9 L406.0,301.2 L406.5,307.5 L407.8,313.8 L409.0,320.2 L409.1,326.5 L408.1,332.8" fill="none" stroke="#f2bf72" stroke-width="0.7"/>
<path d="M411.8,263.3 L410.9,269.6 L409.5,275.9 L408.6,282.3 L409.0,288.6 L410.2,294.9 L411.5,301.2 L411.8,307.5 L410.9,313.8 L409.5,320.2 L408.6,326.5 L409.0,332.8" fill="none" stroke="#f2bf72" stroke-width="0.7"/>
<path d="M411.3,263.3 L411.5,269.6 L412.7,275.9 L414.0,282.3 L414.4,288.6 L413.6,294.9 L412.2,301.2 L411.3,307.5 L411.5,313.8 L412.7,320.2 L414.0,326.5 L414.4,332.8" fill="none" stroke="#f2bf72" stroke-width="0.7"/>
<rect x="150.2" y="263.3" width="437.40000000000003" height="69.5" rx="2.2" fill="none" stroke="#d8431a" stroke-width="1.7"/>
<path d="M360.2,293.4 H364.4 M362.3,291.3 V295.5" stroke="#222" stroke-width="0.9" fill="none"/>
<path d="M526,332.9 H538" stroke="#38e038" stroke-width="1.4" fill="none"/><circle cx="526.2" cy="332.6" r="1.7" fill="none" stroke="#30c830" stroke-width="0.9"/>
</g>
<path d="M595.8,278 L598.8,275 H606 V281 H598.8 Z" fill="#1872d6"/>
</svg>
<svg class="a" style="left:0;top:0;" width="1049" height="567" viewBox="0 0 1049 567">
<path d="M2.2,2.4 L4.0,2.4 L4.2,4.6 L5.0,4.6 L5.2,2.4 L6.4,2.4 L6.3,7.2 L5.2,9.4 L3.6,9.4 L2.4,7.2 Z" fill="#584ea8"/>
<path d="M6.2,7.6 L9.4,6.6 M7.6,3.0 V5.2" stroke="#8c86c4" stroke-width="0.7" fill="none"/>
<rect x="2.3" y="14.2" width="0.9" height="0.9" fill="#a8a8a8"/>
<rect x="2.3" y="16.3" width="0.9" height="0.9" fill="#a8a8a8"/>
<rect x="2.3" y="18.4" width="0.9" height="0.9" fill="#a8a8a8"/>
<rect x="2.3" y="20.5" width="0.9" height="0.9" fill="#a8a8a8"/>
<rect x="2.3" y="22.6" width="0.9" height="0.9" fill="#a8a8a8"/>
<rect x="5.8" y="14.9" width="8" height="8.6" fill="#fafafa"/>
<path d="M7.6,17.2 L9.4,17.2 L9.6,16.0 L10.6,16.0 L10.6,21.6 L9.8,22.6 L8.2,22.6 L7.6,21.2 Z" fill="#5a50aa"/>
<path d="M10.6,17.6 H12.4 M11.4,15.6 V17.2" stroke="#7d76c0" stroke-width="0.7"/>
<rect x="2.3" y="31.0" width="0.9" height="0.9" fill="#b4b4b4"/>
<rect x="2.3" y="33.1" width="0.9" height="0.9" fill="#b4b4b4"/>
<rect x="2.3" y="35.2" width="0.9" height="0.9" fill="#b4b4b4"/>
<rect x="2.3" y="37.3" width="0.9" height="0.9" fill="#b4b4b4"/>
<rect x="2.3" y="39.4" width="0.9" height="0.9" fill="#b4b4b4"/>
<rect x="2.3" y="41.5" width="0.9" height="0.9" fill="#b4b4b4"/>
<rect x="2.3" y="43.6" width="0.9" height="0.9" fill="#b4b4b4"/>
<rect x="2.3" y="45.7" width="0.9" height="0.9" fill="#b4b4b4"/>
<rect x="2.3" y="47.8" width="0.9" height="0.9" fill="#b4b4b4"/>
<path d="M17.9,36.2 L23.6,32.0 L30.0,33.4 L30.0,40.4 L24.4,44.0 L17.9,42.2 Z" fill="#dfe3f8" stroke="#6a74c4" stroke-width="1.1" stroke-linejoin="round"/>
<path d="M17.9,36.2 L23.6,32.0 L30.0,33.4 L24.4,37.6 Z" fill="#f2f4fd"/>
<path d="M17.9,36.2 L24.4,37.6 L24.4,44.0 L17.9,42.2 Z" fill="#b6bfec"/>
<path d="M17.9,36.2 L24.4,37.6 L30.0,33.4 M24.4,37.6 V44.0" fill="none" stroke="#6a74c4" stroke-width="0.9"/>
<circle cx="21.6" cy="39.5" r="2.3" fill="#f6e4ea"/>
<circle cx="21.6" cy="39.5" r="1.5" fill="#d6301c"/>
<path d="M23.4,39.3 L29.6,39.2" stroke="#e79aa0" stroke-width="0.8"/><path d="M29.4,39.2 L32.2,39.3" stroke="#bc6c36" stroke-width="0.9"/>
<path d="M51.2,44.2 L50.9,35.2 L52.6,34.2 L62.8,33.0 L63.2,35.4" fill="#d6d9f4" stroke="#6d66b8" stroke-width="1.0" stroke-linejoin="round"/>
<path d="M54.0,34.4 L57.0,30.0 L60.0,33.6 Z" fill="#22e024"/><rect x="55.4" y="32.6" width="3.2" height="2.4" fill="#22e024"/>
<path d="M50.9,44.2 L53.8,37.8 L65.2,34.8 L62.4,42.2 Z" fill="#e6e8fb" stroke="#6d66b8" stroke-width="1.1" stroke-linejoin="round"/>
<circle cx="88.0" cy="37.2" r="6.7" fill="#f3f4fc" stroke="#8a90c0" stroke-width="0.9"/>
<path d="M81.5,38.6 C82.2,43.4 88.6,46.0 93.2,42.0" fill="none" stroke="#35358e" stroke-width="1.6"/>
<path d="M82.0,34.0 C83.6,30.4 88.6,29.4 92.0,31.8" fill="none" stroke="#6e76b4" stroke-width="1.0"/>
<circle cx="87.7" cy="36.9" r="2.5" fill="#7c86cc"/><circle cx="87.7" cy="36.9" r="1.0" fill="#c4caf0"/>
<path d="M88.0,40.0 L93.0,40.6 L93.2,39.2 L96.0,41.6 L92.8,43.6 L92.9,42.2 L88.0,41.4 Z" fill="#b4224e"/>
<path d="M89.0,42.2 L93.0,43.0 L94.6,44.2" fill="none" stroke="#5040a0" stroke-width="0.8"/>
<path d="M118.9,36.4 L121.2,34.8 L125.0,35.2 L125.0,41.4 L122.6,42.6 L118.9,42.0 Z" fill="#ebe8fb" stroke="#6a62b8" stroke-width="0.9" stroke-linejoin="round"/>
<path d="M118.9,36.4 L122.6,36.8 L125.0,35.2 M122.6,36.8 V42.6 M121.2,34.8 L125.2,32.6" fill="none" stroke="#6a62b8" stroke-width="0.7"/>
<rect x="125.4" y="32.3" width="8.3" height="11.7" fill="#e9de44" stroke="#a9a234" stroke-width="0.8"/>
<path d="M127.2,34.6 H131.8" stroke="#d8cc3c" stroke-width="0.8"/><path d="M127.2,37.2 H131.8 M127.2,41.0 H131.8" stroke="#c2aa22" stroke-width="1.1"/>
<rect x="149.0" y="27.5" width="1.4" height="30" fill="#3f82c0"/>
<ellipse cx="165.8" cy="38.0" rx="7.4" ry="3.4" fill="none" stroke="#d4586a" stroke-width="1.3"/>
<ellipse cx="165.9" cy="38.0" rx="3.9" ry="7.4" fill="none" stroke="#d4586a" stroke-width="1.3"/>
<path d="M163.4,35.6 L166.0,33.9 L169.6,34.8 L169.6,39.6 L167.0,40.8 L163.4,40.0 Z" fill="#eeeafc" stroke="#6a6abc" stroke-width="0.7" stroke-linejoin="round"/>
<path d="M166.8,36.2 L169.6,34.8 L169.6,39.6 L166.8,40.8 Z" fill="#5a62b4"/>
<path d="M163.4,35.6 L166.8,36.2 L169.6,34.8" fill="none" stroke="#6a6abc" stroke-width="0.6"/>
<circle cx="163.0" cy="40.9" r="0.9" fill="#e83040"/>
<path d="M198.0,39.4 H213.0 M204.4,31.0 V44.4" stroke="#3a32a2" stroke-width="1.0" fill="none"/>
<path d="M204.4,31.4 L206.7,34.2 H202.1 Z M204.4,44.8 L206.7,42.2 H202.1 Z" fill="#3a32a2"/>
<path d="M201.2,37.2 L198.6,39.4 L201.2,41.6 M209.8,37.2 L212.4,39.4 L209.8,41.6" stroke="#3a32a2" stroke-width="1.2" fill="none"/>
<path d="M202.0,30.5 H206.8" stroke="#8a8aa8" stroke-width="0.8"/>
<path d="M197.6,37.6 L199.0,41.2 M213.2,37.6 L211.8,41.2" stroke="#7a78c8" stroke-width="0.6" fill="none"/>
<path d="M243.2,46.2 L243.2,41.6 C243.2,38.4 246.0,37.0 248.6,37.0 L256.4,37.0 C259.4,37.0 261.8,38.6 261.8,41.6 L261.8,46.2 Z" fill="#f2f6fc"/>
<ellipse cx="251.4" cy="33.9" rx="6.0" ry="5.0" fill="#f4f6fb"/>
<path d="M243.8,45.6 L243.8,41.6 C243.8,38.8 246.2,37.6 248.6,37.6 L254,37.6 L254,45.6 Z" fill="#2c80d6"/>
<path d="M243.8,45.6 L243.8,42.4 L254,42.4 L254,45.6 Z" fill="#2068c0"/>
<ellipse cx="251.4" cy="33.9" rx="5.4" ry="4.4" fill="#ea8e2c"/>
<ellipse cx="251.5" cy="34.6" rx="3.8" ry="3.5" fill="#f6b050"/>
<circle cx="256.5" cy="41.3" r="4.4" fill="#1a4cb4"/>
<path d="M252.6,43.2 A4.4,4.4 0 0 1 256.5,36.9 L256.5,45.7 A4.4,4.4 0 0 1 252.6,43.2 Z" fill="#2a62c8"/>
<path d="M256.5,40.4 V45.0 M256.5,38.4 V39.3" stroke="#eef2fc" stroke-width="1.2"/>
<path d="M281.6,35.4 L283.4,34.2 L283.4,29.8 L298.0,29.8 L298.0,34.2 L299.8,35.4 L299.8,46.4 L281.6,46.4 Z" fill="#f5f5fa" stroke="#b4b4be" stroke-width="0.8" stroke-linejoin="round"/>
<path d="M283.3,29.9 H298.1 V36.4 L290.7,40.4 L283.3,36.4 Z" fill="#f1e678" stroke="#c9ba4a" stroke-width="0.7" stroke-linejoin="round"/>
<path d="M281.6,35.6 L290.7,41.2 L299.8,35.6 L299.8,46.4 L281.6,46.4 Z" fill="#f7f7fc" stroke="#b4b4be" stroke-width="0.8" stroke-linejoin="round"/>
<path d="M282.0,46.2 L288.8,40.4 M299.4,46.2 L292.6,40.4" stroke="#d4d4e0" stroke-width="0.7"/>
<rect x="289.8" y="29.0" width="1.8" height="1.2" fill="#8c8456"/>
<rect x="320.2" y="29.6" width="17.8" height="16.2" fill="#d2d2d2" stroke="#bdbdbd" stroke-width="0.7"/>
<rect x="322.4" y="31.4" width="13.6" height="1.4" fill="#e9e9e9"/>
<rect x="322.8" y="33.2" width="8.4" height="8.0" fill="#ebebeb"/>
<path d="M322.8,41.2 L322.8,44.6 L331.2,44.6 L331.2,38 Z" fill="#bebebe"/>
<path d="M324.6,34.4 L330.4,42.4" stroke="#878787" stroke-width="1.7"/><path d="M329.8,34.6 L327.4,37.6" stroke="#b4b4b4" stroke-width="1.0"/>
<rect x="331.6" y="33.6" width="5.0" height="11.2" fill="#f1f1f1"/>
<path d="M332.2,36.3 H336.0 M332.2,39.5 H336.0 M332.2,42.8 H336.0" stroke="#9a9a9a" stroke-width="1.3"/>
<rect x="355.6" y="50.4" width="5.4" height="1.2" fill="#222"/>
<path d="M355.4,52.8 H361.2 L358.3,56.0 Z" fill="#222"/>
<path d="M981.2,5.8 H986.6" stroke="#333" stroke-width="0.8"/>
<rect x="1005.4" y="4.0" width="4.2" height="4.2" rx="0.6" fill="none" stroke="#333" stroke-width="0.8"/>
<path d="M1006.6,4.0 V3.0 H1010.8 V7.0 H1009.6" fill="none" stroke="#333" stroke-width="0.7"/>
<path d="M1030.4,3.0 L1035.6,8.2 M1035.6,3.0 L1030.4,8.2" stroke="#333" stroke-width="0.8"/>
<rect x="1022.0" y="22.4" width="3.6" height="1.4" fill="#222"/>
<rect x="1031.0" y="20.9" width="3.2" height="3.0" fill="none" stroke="#222" stroke-width="0.9"/>
<path d="M1032.0,20.6 V19.8 H1035.2 V22.6 H1034.4" fill="none" stroke="#222" stroke-width="0.8"/>
<path d="M1039.7,19.6 L1043.9,23.8 M1043.9,19.6 L1039.7,23.8" stroke="#222" stroke-width="1.1"/>
<rect x="1047.2" y="4.4" width="1.2" height="1.2" fill="#333"/><rect x="1047.2" y="8.0" width="1.2" height="1.2" fill="#333"/>
<path d="M110.8,63.8 H115.60000000000001 L113.2,66.6 Z" fill="#f4f4f4"/>
<path d="M121.3,63.0 H123.3 V65.6 H121.3 Z M120.60000000000001,65.8 H124.0 M122.3,65.8 V67.2" fill="none" stroke="#e6e6e6" stroke-width="0.7"/>
<path d="M129.4,62.8 L133.6,67.0 M133.6,62.8 L129.4,67.0" stroke="#f6f6f6" stroke-width="1.0"/>
<path d="M1020.5,63.8 H1025.3 L1022.9,66.6 Z" fill="#f4f4f4"/>
<path d="M1031.5,63.0 H1033.5 V65.6 H1031.5 Z M1030.8000000000002,65.8 H1034.2 M1032.5,65.8 V67.2" fill="none" stroke="#e6e6e6" stroke-width="0.7"/>
<path d="M1039.5,62.8 L1043.6999999999998,67.0 M1043.6999999999998,62.8 L1039.5,67.0" stroke="#f6f6f6" stroke-width="1.0"/>
<path d="M127.5,79.3 L129.6,77.2 L131.7,79.3" fill="none" stroke="#333" stroke-width="1.2"/>
<path d="M127.5,536.4 L129.6,538.5 L131.7,536.4" fill="none" stroke="#333" stroke-width="1.2"/>
<path d="M145.7,68.0 L147.2,69.8 L149.79999999999998,66.2" fill="none" stroke="#222" stroke-width="0.8"/>
<path d="M232.0,68.0 L233.5,69.8 L236.1,66.2" fill="none" stroke="#222" stroke-width="0.8"/>
<path d="M505.0,68.6 L506.6,70.2 L508.2,68.6" fill="none" stroke="#b0b0b0" stroke-width="0.7"/>
<path d="M4.6,545.4 H10.8 V553.4 H4.6 Z M7.7,545.4 V553.4 M4.6,549.4 H10.8" fill="none" stroke="#3a3ac0" stroke-width="0.9"/>
<circle cx="50.4" cy="546.4" r="1.6" fill="#f09a3a"/><path d="M47.4,552.8 V550.4 C47.4,548.4 53.4,548.4 53.4,550.4 V552.8 Z" fill="#2c86d8"/><circle cx="53.0" cy="551.6" r="1.8" fill="#1a5cc0"/>
<path d="M93.4,548.6 L95.0,547.4 L96.6,548.0 V551.4 L95.0,552.4 L93.4,551.8 Z" fill="#dfe3fa" stroke="#5555b4" stroke-width="0.6"/><rect x="96.8" y="546.0" width="3.4" height="6.8" fill="#d8c890" stroke="#a89a70" stroke-width="0.5"/>
</svg>
<svg class="a" style="left:0;top:0;will-change:transform;opacity:0.999;" width="1049" height="567" viewBox="0 0 1049 567" font-family="'Liberation Sans', sans-serif">
<text x="12.40" y="9.25" font-size="8.0" font-weight="400" fill="#111" textLength="133.50" lengthAdjust="spacingAndGlyphs" >VolScan Profiler - [White ceramic cylinder.vpd]</text>
<text x="19.60" y="22.15" font-size="7.4" font-weight="700" fill="#222" textLength="9.60" lengthAdjust="spacingAndGlyphs" >File</text>
<text x="37.60" y="22.15" font-size="7.4" font-weight="700" fill="#222" textLength="10.10" lengthAdjust="spacingAndGlyphs" >Edit</text>
<text x="56.60" y="22.15" font-size="7.4" font-weight="700" fill="#222" textLength="13.60" lengthAdjust="spacingAndGlyphs" >View</text>
<text x="78.60" y="22.15" font-size="7.4" font-weight="700" fill="#222" textLength="14.80" lengthAdjust="spacingAndGlyphs" >Tools</text>
<text x="102.00" y="22.15" font-size="7.4" font-weight="700" fill="#222" textLength="23.80" lengthAdjust="spacingAndGlyphs" >Window</text>
<text x="134.00" y="22.15" font-size="7.4" font-weight="700" fill="#222" textLength="12.80" lengthAdjust="spacingAndGlyphs" >Help</text>
<text x="11.00" y="53.58" font-size="7.2" font-weight="700" fill="#222" textLength="27.10" lengthAdjust="spacingAndGlyphs" >New Scan</text>
<text x="50.10" y="53.58" font-size="7.2" font-weight="700" fill="#222" textLength="16.10" lengthAdjust="spacingAndGlyphs" >Open</text>
<text x="82.40" y="53.58" font-size="7.2" font-weight="700" fill="#222" textLength="12.40" lengthAdjust="spacingAndGlyphs" >Save</text>
<text x="109.00" y="53.58" font-size="7.2" font-weight="700" fill="#222" textLength="36.90" lengthAdjust="spacingAndGlyphs" >Product Info.</text>
<text x="155.40" y="53.58" font-size="7.2" font-weight="700" fill="#222" textLength="21.90" lengthAdjust="spacingAndGlyphs" >3D view</text>
<text x="186.90" y="53.58" font-size="7.2" font-weight="700" fill="#222" textLength="38.20" lengthAdjust="spacingAndGlyphs" >Measurement</text>
<text x="235.00" y="53.58" font-size="7.2" font-weight="700" fill="#222" textLength="36.20" lengthAdjust="spacingAndGlyphs" >Custom Info.</text>
<text x="281.10" y="53.58" font-size="7.2" font-weight="700" fill="#222" textLength="20.10" lengthAdjust="spacingAndGlyphs" >Mail To</text>
<text x="311.50" y="53.58" font-size="7.2" font-weight="700" fill="#a9a9a9" textLength="35.90" lengthAdjust="spacingAndGlyphs" >View In Excel</text>
<text x="2.50" y="67.95" font-size="7.4" font-weight="700" fill="#e6e6e6" textLength="56.60" lengthAdjust="spacingAndGlyphs" >Product Information</text>
<text x="612.50" y="67.98" font-size="7.2" font-weight="700" fill="#e6e6e6" textLength="23.40" lengthAdjust="spacingAndGlyphs" >3D View</text>
<text x="2.80" y="82.15" font-size="7.4" font-weight="400" fill="#111" textLength="28.20" lengthAdjust="spacingAndGlyphs" >Sample ID:</text>
<text x="11.20" y="92.01" font-size="7.6" font-weight="700" fill="#000" textLength="99.80" lengthAdjust="spacingAndGlyphs" stroke="#000" stroke-width="0.3">white cylinder cer for show vspa</text>
<text x="2.80" y="101.75" font-size="7.4" font-weight="400" fill="#111" textLength="45.60" lengthAdjust="spacingAndGlyphs" >Name of Product:</text>
<text x="11.20" y="111.81" font-size="7.6" font-weight="700" fill="#000" textLength="99.80" lengthAdjust="spacingAndGlyphs" stroke="#000" stroke-width="0.3">white cylinder cer for show vspa</text>
<text x="2.80" y="121.55" font-size="7.4" font-weight="400" fill="#111" textLength="31.10" lengthAdjust="spacingAndGlyphs" >Batchname:</text>
<text x="2.80" y="141.15" font-size="7.4" font-weight="400" fill="#111" textLength="48.00" lengthAdjust="spacingAndGlyphs" >Scan Date &amp; Time:</text>
<text x="11.20" y="150.81" font-size="7.6" font-weight="700" fill="#000" textLength="98.60" lengthAdjust="spacingAndGlyphs" stroke="#000" stroke-width="0.3">Monday, July 08, 2019 10:50:21</text>
<text x="2.80" y="160.75" font-size="7.4" font-weight="400" fill="#111" textLength="28.40" lengthAdjust="spacingAndGlyphs" >User Date:</text>
<text x="11.20" y="170.61" font-size="7.6" font-weight="700" fill="#000" textLength="74.80" lengthAdjust="spacingAndGlyphs" stroke="#000" stroke-width="0.3">Thursday, May 23, 2019</text>
<text x="2.80" y="180.25" font-size="7.4" font-weight="400" fill="#111" textLength="32.40" lengthAdjust="spacingAndGlyphs" >Volume (ml):</text>
<text x="11.20" y="190.01" font-size="7.6" font-weight="700" fill="#000" textLength="17.10" lengthAdjust="spacingAndGlyphs" stroke="#000" stroke-width="0.3">31.41</text>
<text x="2.80" y="199.85" font-size="7.4" font-weight="400" fill="#111" textLength="29.50" lengthAdjust="spacingAndGlyphs" >Weight (g):</text>
<text x="11.20" y="209.41" font-size="7.6" font-weight="700" fill="#000" textLength="17.10" lengthAdjust="spacingAndGlyphs" stroke="#000" stroke-width="0.3">47.83</text>
<text x="2.80" y="219.55" font-size="7.4" font-weight="400" fill="#111" textLength="58.60" lengthAdjust="spacingAndGlyphs" >Specific Volume (ml/g):</text>
<text x="11.20" y="229.21" font-size="7.6" font-weight="700" fill="#000" textLength="13.90" lengthAdjust="spacingAndGlyphs" stroke="#000" stroke-width="0.3">0.66</text>
<text x="2.80" y="239.05" font-size="7.4" font-weight="400" fill="#111" textLength="65.50" lengthAdjust="spacingAndGlyphs" >Product Density (Kg/m³):</text>
<text x="11.20" y="248.91" font-size="7.6" font-weight="700" fill="#000" textLength="20.50" lengthAdjust="spacingAndGlyphs" stroke="#000" stroke-width="0.3">1523.1</text>
<text x="2.80" y="258.55" font-size="7.4" font-weight="400" fill="#111" textLength="57.50" lengthAdjust="spacingAndGlyphs" >Product Length (mm):</text>
<text x="11.20" y="268.41" font-size="7.6" font-weight="700" fill="#000" textLength="13.90" lengthAdjust="spacingAndGlyphs" stroke="#000" stroke-width="0.3">63.5</text>
<text x="2.80" y="278.35" font-size="7.4" font-weight="400" fill="#111" textLength="54.10" lengthAdjust="spacingAndGlyphs" >Surface Area (mm²):</text>
<text x="11.20" y="288.11" font-size="7.6" font-weight="700" fill="#000" textLength="20.50" lengthAdjust="spacingAndGlyphs" stroke="#000" stroke-width="0.3">8349.1</text>
<text x="2.80" y="307.85" font-size="7.4" font-weight="400" fill="#111" textLength="48.80" lengthAdjust="spacingAndGlyphs" >Max. Height (mm):</text>
<text x="11.20" y="317.61" font-size="7.6" font-weight="700" fill="#000" textLength="13.90" lengthAdjust="spacingAndGlyphs" stroke="#000" stroke-width="0.3">13.0</text>
<text x="2.80" y="327.45" font-size="7.4" font-weight="400" fill="#111" textLength="72.60" lengthAdjust="spacingAndGlyphs" >Width at Max. Height (mm):</text>
<text x="11.20" y="337.11" font-size="7.6" font-weight="700" fill="#000" textLength="13.90" lengthAdjust="spacingAndGlyphs" stroke="#000" stroke-width="0.3">10.1</text>
<text x="2.80" y="347.15" font-size="7.4" font-weight="400" fill="#111" textLength="76.00" lengthAdjust="spacingAndGlyphs" >Aspect Ratio at Max. Height:</text>
<text x="11.20" y="356.81" font-size="7.6" font-weight="700" fill="#000" textLength="13.90" lengthAdjust="spacingAndGlyphs" stroke="#000" stroke-width="0.3">1.28</text>
<text x="2.80" y="376.85" font-size="7.4" font-weight="400" fill="#111" textLength="72.60" lengthAdjust="spacingAndGlyphs" >Height at Max. Width (mm):</text>
<text x="11.20" y="386.51" font-size="7.6" font-weight="700" fill="#000" textLength="13.90" lengthAdjust="spacingAndGlyphs" stroke="#000" stroke-width="0.3">63.2</text>
<text x="2.80" y="396.25" font-size="7.4" font-weight="400" fill="#111" textLength="72.60" lengthAdjust="spacingAndGlyphs" >Height at Max. Width (mm):</text>
<text x="11.20" y="406.01" font-size="7.6" font-weight="700" fill="#000" textLength="13.90" lengthAdjust="spacingAndGlyphs" stroke="#000" stroke-width="0.3">10.4</text>
<text x="2.80" y="416.05" font-size="7.4" font-weight="400" fill="#111" textLength="73.90" lengthAdjust="spacingAndGlyphs" >Aspect Ratio at Max. Width:</text>
<text x="11.20" y="425.51" font-size="7.6" font-weight="700" fill="#000" textLength="13.90" lengthAdjust="spacingAndGlyphs" stroke="#000" stroke-width="0.3">0.16</text>
<text x="2.80" y="445.65" font-size="7.4" font-weight="400" fill="#111" textLength="72.10" lengthAdjust="spacingAndGlyphs" >Height of Middle Slice (mm):</text>
<text x="11.20" y="455.11" font-size="7.6" font-weight="700" fill="#000" textLength="13.90" lengthAdjust="spacingAndGlyphs" stroke="#000" stroke-width="0.3">10.3</text>
<text x="2.80" y="464.95" font-size="7.4" font-weight="400" fill="#111" textLength="70.00" lengthAdjust="spacingAndGlyphs" >Width of Middle Slice (mm):</text>
<text x="11.20" y="474.81" font-size="7.6" font-weight="700" fill="#000" textLength="13.90" lengthAdjust="spacingAndGlyphs" stroke="#000" stroke-width="0.3">63.2</text>
<text x="2.80" y="484.35" font-size="7.4" font-weight="400" fill="#111" textLength="73.90" lengthAdjust="spacingAndGlyphs" >Aspect Ratio of Middle Slice:</text>
<text x="11.20" y="494.11" font-size="7.6" font-weight="700" fill="#000" textLength="13.90" lengthAdjust="spacingAndGlyphs" stroke="#000" stroke-width="0.3">0.16</text>
<text x="2.80" y="514.25" font-size="7.4" font-weight="400" fill="#111" textLength="99.20" lengthAdjust="spacingAndGlyphs" >MEC (Minimum Enclosing Circle) (mm) :</text>
<text x="11.20" y="523.81" font-size="7.6" font-weight="700" fill="#000" textLength="16.40" lengthAdjust="spacingAndGlyphs" stroke="#000" stroke-width="0.3">63.81</text>
<text x="2.80" y="533.75" font-size="7.4" font-weight="400" fill="#111" textLength="91.20" lengthAdjust="spacingAndGlyphs" >Max Inclusive Square Volume (ml) :</text>
<text x="104.00" y="309.71" font-size="7.6" font-weight="700" fill="#333" textLength="8.00" lengthAdjust="spacingAndGlyphs" >&gt;&gt;</text>
<text x="104.30" y="378.31" font-size="7.6" font-weight="700" fill="#444" textLength="8.00" lengthAdjust="spacingAndGlyphs" >&gt;&gt;</text>
<text x="104.30" y="447.01" font-size="7.6" font-weight="700" fill="#444" textLength="8.00" lengthAdjust="spacingAndGlyphs" >&gt;&gt;</text>
<text x="13.10" y="552.68" font-size="7.2" font-weight="400" fill="#8a8a8a" textLength="27.70" lengthAdjust="spacingAndGlyphs" >Data View</text>
<text x="58.00" y="552.68" font-size="7.2" font-weight="400" fill="#8a8a8a" textLength="28.40" lengthAdjust="spacingAndGlyphs" >Custom I...</text>
<text x="102.30" y="552.68" font-size="7.2" font-weight="700" fill="#222" textLength="29.70" lengthAdjust="spacingAndGlyphs" >Product I...</text>
<text x="2.20" y="565.55" font-size="7.4" font-weight="400" fill="#222" textLength="16.60" lengthAdjust="spacingAndGlyphs" >Ready</text>
<text x="947.20" y="564.67" font-size="6.6" font-weight="400" fill="#555" textLength="50.00" lengthAdjust="spacingAndGlyphs" >MACRO RUNNING</text>
<text x="1001.00" y="564.67" font-size="6.6" font-weight="400" fill="#777" textLength="12.00" lengthAdjust="spacingAndGlyphs" >CAP</text>
<text x="1016.00" y="564.67" font-size="6.6" font-weight="700" fill="#111" textLength="13.50" lengthAdjust="spacingAndGlyphs" >NUM</text>
<text x="1033.00" y="564.67" font-size="6.6" font-weight="400" fill="#777" textLength="13.00" lengthAdjust="spacingAndGlyphs" >SCRL</text>
<text x="153.00" y="70.61" font-size="7.0" font-weight="400" fill="#111" textLength="38.60" lengthAdjust="spacingAndGlyphs" stroke="#111" stroke-width="0.22">Show All Slices</text>
<text x="211.20" y="70.61" font-size="7.0" font-weight="400" fill="#111" textLength="11.50" lengthAdjust="spacingAndGlyphs" stroke="#111" stroke-width="0.22">Hold</text>
<text x="239.60" y="70.61" font-size="7.0" font-weight="400" fill="#111" textLength="36.00" lengthAdjust="spacingAndGlyphs" stroke="#111" stroke-width="0.22">Snap To Data</text>
<text x="452.20" y="71.61" font-size="7.0" font-weight="400" fill="#111" textLength="27.00" lengthAdjust="spacingAndGlyphs" stroke="#111" stroke-width="0.22">Held Slice:</text>
<text x="515.80" y="71.61" font-size="7.0" font-weight="400" fill="#111" textLength="32.00" lengthAdjust="spacingAndGlyphs" stroke="#111" stroke-width="0.22">Active Slice:</text>
<text x="552.40" y="71.61" font-size="7.0" font-weight="400" fill="#111" textLength="9.00" lengthAdjust="spacingAndGlyphs" stroke="#111" stroke-width="0.22">186</text>
<text x="569.80" y="71.61" font-size="7.0" font-weight="400" fill="#111" textLength="5.00" lengthAdjust="spacingAndGlyphs" stroke="#111" stroke-width="0.22">of</text>
<text x="578.00" y="71.61" font-size="7.0" font-weight="400" fill="#111" textLength="25.20" lengthAdjust="spacingAndGlyphs" stroke="#111" stroke-width="0.22">319 slices</text>
<text x="150.20" y="88.61" font-size="7.0" font-weight="400" fill="#111" textLength="169.20" lengthAdjust="spacingAndGlyphs" stroke="#111" stroke-width="0.22">Click and drag the mouse on the 2D data to make a measurement.</text>
<text x="145.30" y="552.71" font-size="7.0" font-weight="400" fill="#111" textLength="32.60" lengthAdjust="spacingAndGlyphs" stroke="#111" stroke-width="0.22">Slice Height:</text>
<text x="180.30" y="552.71" font-size="7.0" font-weight="400" fill="#111" textLength="20.90" lengthAdjust="spacingAndGlyphs" stroke="#111" stroke-width="0.22">10.3mm,</text>
<text x="203.60" y="552.71" font-size="7.0" font-weight="400" fill="#111" textLength="15.50" lengthAdjust="spacingAndGlyphs" stroke="#111" stroke-width="0.22">Width:</text>
<text x="221.80" y="552.71" font-size="7.0" font-weight="400" fill="#111" textLength="22.30" lengthAdjust="spacingAndGlyphs" stroke="#111" stroke-width="0.22">62.4mm,</text>
<text x="245.80" y="552.71" font-size="7.0" font-weight="400" fill="#111" textLength="205.90" lengthAdjust="spacingAndGlyphs" stroke="#111" stroke-width="0.22">Aspect Ratio: 0.17, Z Pos: 37.0mm, Area: 6.2cm², Volume: 0.1ml, Circumference:</text>
<text x="454.80" y="552.71" font-size="7.0" font-weight="400" fill="#111" textLength="23.40" lengthAdjust="spacingAndGlyphs" stroke="#111" stroke-width="0.22">144.2mm.</text>
</svg>
</body></html>
